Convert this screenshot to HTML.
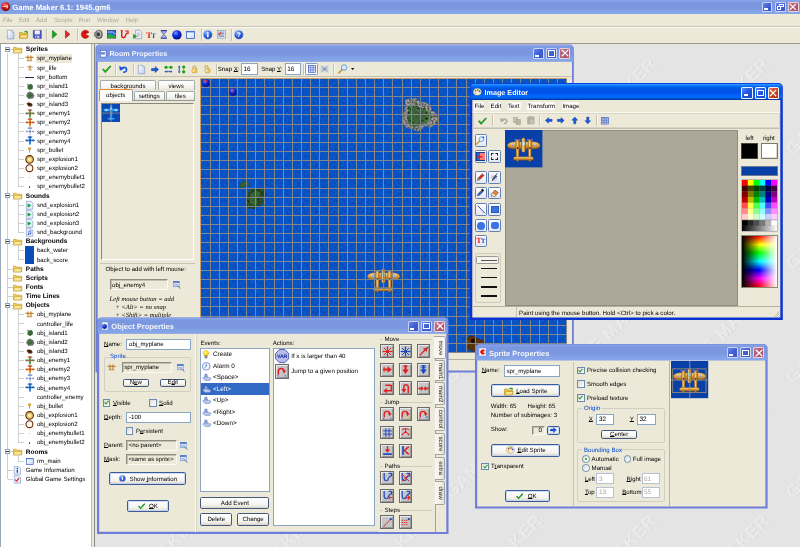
<!DOCTYPE html><html><head><meta charset="utf-8"><title>Game Maker 6.1: 1945.gm6</title><style>
html,body{margin:0;padding:0}
body{width:800px;height:547px;overflow:hidden;background:#e4e4e4;position:relative;font-family:"Liberation Sans",sans-serif;font-size:6.1px;color:#000;text-rendering:geometricPrecision}
div{position:absolute;box-sizing:border-box}
svg{position:absolute;overflow:visible}
.t{white-space:nowrap;line-height:8px;height:8px;font-size:6.1px}
.b{font-weight:bold}
.tt{white-space:nowrap;line-height:10px;height:10px;font-weight:bold;color:#fff;font-size:7.3px}
u{text-decoration:underline;text-decoration-thickness:0.45px;text-underline-offset:0.25px}
.btn{border:0.5px solid #44587e;border-radius:1.7px;background:linear-gradient(#fff,#f4f3ee 70%,#d8d4c6)}
.fld{border:0.6px solid #8ba6c4;background:#fff}
.fldd{border:0.6px solid #8e8c7e;border-right-color:#fbfaf4;border-bottom-color:#fbfaf4;background:#ece9d8;box-shadow:inset 1px 1px 0 #c2bfb0}
.cb{border:0.6px solid #6a8cb0;background:linear-gradient(135deg,#dcdcd4,#fff)}
.rb{border:0.6px solid #6a8cb0;background:linear-gradient(135deg,#dcdcd4,#fff);border-radius:50%}
.gb{border:0.6px solid #d0d0bf;border-radius:2px}
.ab{border:0.6px solid #6a6a6a;background:#c6c6c6;box-shadow:inset 0.7px 0.7px 0 #f4f4f4,inset -0.7px -0.7px 0 #888}
.tb{border:0.6px solid #6080b8;border-radius:1.5px;background:linear-gradient(#fff,#e6e6ee)}
</style></head><body><div id="w" style="left:0;top:0;width:800px;height:547px;will-change:transform">
<div style="left:0px;top:0px;width:800px;height:14.2px;background:linear-gradient(180deg,#8ca6ea 0,#7a97e0 18%,#7a96df 55%,#83a2e6 80%,#86a8ea 100%)"></div>
<svg style="left:0.9px;top:2.2px" width="9.4" height="9.4" viewBox="0 0 21 21"><defs><radialGradient id="rb" cx="0.4" cy="0.3" r="0.7"><stop offset="0" stop-color="#ff8a7a"/><stop offset="0.45" stop-color="#e01818"/><stop offset="1" stop-color="#7a0808"/></radialGradient></defs><circle cx="10.5" cy="10.5" r="10" fill="url(#rb)"/><path d="M3 9h9v-3h4v8h-4v-3h-9z" fill="#f4dada" opacity=".85"/></svg>
<div class="tt" style="left:12.2px;top:3.3px;font-size:7.7px;letter-spacing:0px;">Game Maker 6.1: 1945.gm6</div>
<div style="left:761.9px;top:1.6px;width:10.6px;height:10.6px;background:linear-gradient(135deg,#6a88ea,#4060d4 50%,#3a56cc);border:0.7px solid rgba(255,255,255,0.72);border-radius:1.6px"></div>
<div style="left:764.23px;top:8.17px;width:3.82px;height:1.91px;background:#fff"></div>
<div style="left:774.8px;top:1.6px;width:10.8px;height:10.6px;background:linear-gradient(135deg,#6a88ea,#4060d4 50%,#3a56cc);border:0.7px solid rgba(255,255,255,0.72);border-radius:1.6px"></div>
<div style="left:779.34px;top:3.51px;width:4.32px;height:3.92px;border:0.7px solid #fff;border-top-width:1.2px"></div>
<div style="left:776.96px;top:6.05px;width:4.32px;height:4.03px;border:0.7px solid #fff;border-top-width:1.2px;background:#3c62d8"></div>
<div style="left:788px;top:1.6px;width:10.7px;height:10.6px;background:linear-gradient(135deg,#c8788c,#b45c74 50%,#a85068);border:0.7px solid rgba(255,255,255,0.72);border-radius:1.6px"></div>
<svg style="left:790.49px;top:4.04px" width="5.72" height="5.72" viewBox="0 0 10 10"><path d="M0.5 0.5L9.5 9.5M9.5 0.5L0.5 9.5" stroke="#fff" stroke-width="2" stroke-linecap="square"/></svg>
<div style="left:0px;top:14.2px;width:800px;height:11.4px;background:#ece9d8"></div>
<div class="t" style="left:2.9px;top:16.7px;color:#aca899;">File</div>
<div class="t" style="left:19px;top:16.7px;color:#aca899;">Edit</div>
<div class="t" style="left:36px;top:16.7px;color:#aca899;">Add</div>
<div class="t" style="left:54px;top:16.7px;color:#aca899;">Scripts</div>
<div class="t" style="left:79px;top:16.7px;color:#aca899;">Run</div>
<div class="t" style="left:97px;top:16.7px;color:#aca899;">Window</div>
<div class="t" style="left:125.5px;top:16.7px;color:#aca899;">Help</div>
<div style="left:0px;top:25.6px;width:800px;height:17.6px;background:#ece9d8;border-top:0.6px solid #c9c5b5;box-shadow:inset 0 0.7px 0 #fff"></div>
<div style="left:0px;top:43.1px;width:800px;height:1px;background:#9c9a8e"></div>
<div style="left:45.5px;top:28.5px;width:1.2px;height:12px;border-left:0.6px solid #c8c4b2;border-right:0.6px solid #f6f4ea"></div>
<div style="left:76.5px;top:28.5px;width:1.2px;height:12px;border-left:0.6px solid #c8c4b2;border-right:0.6px solid #f6f4ea"></div>
<div style="left:201px;top:28.5px;width:1.2px;height:12px;border-left:0.6px solid #c8c4b2;border-right:0.6px solid #f6f4ea"></div>
<div style="left:230.5px;top:28.5px;width:1.2px;height:12px;border-left:0.6px solid #c8c4b2;border-right:0.6px solid #f6f4ea"></div>
<svg style="left:6.6px;top:30px" width="7.2" height="9.2" viewBox="0 0 14 18"><defs><linearGradient id="pg" x1="0" y1="0" x2="1" y2="1"><stop offset="0" stop-color="#fff"/><stop offset="1" stop-color="#b8cef0"/></linearGradient></defs><path d="M0.6 0.6h9l3.8 3.8v13h-12.8z" fill="url(#pg)" stroke="#7088b8" stroke-width="1.1"/><path d="M9.6 0.6v3.8h3.8" fill="#e6eefc" stroke="#7088b8" stroke-width="1"/></svg>
<svg style="left:19px;top:30px" width="9.4" height="9" viewBox="0 0 19 18"><path d="M1 5h6l1.5 2h8.5v9.5h-16z" fill="#f0c83c" stroke="#a87c10" stroke-width="1"/><path d="M1 16.5l3-7h14.5l-3 7z" fill="#fbe487" stroke="#a87c10" stroke-width="1"/><path d="M10 4c2-3 5-3 7-1l1-1.2v4h-4l1.2-1.2c-1.4-1.2-3-1-4 .2z" fill="#28a028"/></svg>
<svg style="left:33px;top:30.2px" width="8.6" height="8.8" viewBox="0 0 17 17"><path d="M0.6 0.6h15.8v15.8h-14l-1.8-1.8z" fill="#4858c8" stroke="#283088" stroke-width="1"/><rect x="3.5" y="0.8" width="10" height="7.5" fill="#f4f4fc"/><rect x="4.5" y="11" width="8" height="5.4" fill="#c8ccea"/><rect x="6" y="12" width="2.4" height="3.6" fill="#4858c8"/></svg>
<svg style="left:52px;top:30.4px" width="5.4" height="8.6" viewBox="0 0 10 16"><path d="M0.8 0.8L9.2 8L0.8 15.2z" fill="#18a818" stroke="#0a6a0a" stroke-width="1"/></svg>
<svg style="left:65px;top:30.4px" width="5.4" height="8.6" viewBox="0 0 10 16"><path d="M0.8 0.8L9.2 8L0.8 15.2z" fill="#e02828" stroke="#8a1010" stroke-width="1"/></svg>
<svg style="left:80.9px;top:30.3px" width="8.6" height="8.6" viewBox="0 0 20 20"><path d="M10 10L18.6 5.2A9.6 9.6 0 1 0 18.6 14.8z" fill="#e81010" stroke="#7a0000" stroke-width="1"/><circle cx="9.5" cy="5.2" r="1.4" fill="#400"/></svg>
<svg style="left:94px;top:30.2px" width="8.8" height="8.8" viewBox="0 0 20 20"><defs><radialGradient id="sg" cx="0.45" cy="0.45" r="0.6"><stop offset="0" stop-color="#555"/><stop offset="0.5" stop-color="#bbb"/><stop offset="1" stop-color="#444"/></radialGradient></defs><ellipse cx="11" cy="10" rx="8" ry="9.5" fill="url(#sg)" stroke="#333" stroke-width="1"/><ellipse cx="10" cy="10" rx="3.2" ry="4.2" fill="#333"/><path d="M1 6l5-2v12l-5-2z" fill="#888" stroke="#444" stroke-width=".8"/></svg>
<svg style="left:106.6px;top:30.4px" width="9.2" height="8.4" viewBox="0 0 18 17"><rect x="0.6" y="0.6" width="16.8" height="15.8" fill="#2c6ad8" stroke="#1a2a5a" stroke-width="1.2"/><path d="M1.2 11c3-4 5-4 8-1s5 1 7.6-2v8.2h-15.6z" fill="#28a838"/><path d="M1.2 4h10l3 3h3" stroke="#dfeaff" stroke-width="1.4" fill="none"/></svg>
<svg style="left:119.6px;top:30.2px" width="8.8" height="8.8" viewBox="0 0 18 18"><path d="M3.500 1.500v10.500c0 5 7.500 5 7.500 0 0-3 3-4 4.500-6.500" fill="none" stroke="#e01828" stroke-width="2.800"/><path d="M10.500 2h6v6" fill="none" stroke="#e01828" stroke-width="2.400"/><path d="M1 1.500h5" stroke="#e01828" stroke-width="2"/></svg>
<svg style="left:132.8px;top:30px" width="9.2" height="9.2" viewBox="0 0 18 18"><path d="M5 0.6h8.5l3.5 3.5v13h-12z" fill="#eef2fa" stroke="#6078a8" stroke-width="1"/><path d="M7 6h7M7 8.5h7M7 11h7M7 13.5h5" stroke="#7a8cb8" stroke-width="0.9"/><path d="M0.8 8.2L7 12.5L0.8 16.8z" fill="#18a818" stroke="#0a6a0a" stroke-width="0.8"/></svg>
<div class="t b" style="left:146.2px;top:31.3px;font-size:8.6px;color:#e01818;font-family:'Liberation Serif',serif;letter-spacing:-0.7px">T<span style="font-size:7px;color:#1848c8">T</span></div>
<svg style="left:160px;top:30.2px" width="7.6" height="8.8" viewBox="0 0 15 18"><path d="M1 1h13M1 17h13" stroke="#283088" stroke-width="1.8"/><path d="M2.5 2c0 4 3.5 5 5 7 1.500-2 5-3 5-7zM2.500 16c0-4 3.500-5 5-7 1.500 2 5 3 5 7z" fill="#9ab4f0" stroke="#283088" stroke-width="1"/></svg>
<svg style="left:171.9px;top:29.9px" width="9.8" height="9.8" viewBox="0 0 20 20"><defs><radialGradient id="bg1" cx="0.38" cy="0.3" r="0.75"><stop offset="0" stop-color="#7aa0ff"/><stop offset="0.4" stop-color="#1030e8"/><stop offset="1" stop-color="#000878"/></radialGradient></defs><circle cx="10" cy="10" r="9.600" fill="url(#bg1)"/></svg>
<svg style="left:185.6px;top:30.6px" width="9" height="8" viewBox="0 0 18 16"><defs><linearGradient id="rmg" x1="0" y1="0" x2="1" y2="1"><stop offset="0" stop-color="#fff"/><stop offset="1" stop-color="#c4dcfc"/></linearGradient></defs><rect x="0.8" y="0.8" width="16.4" height="14.4" fill="url(#rmg)" stroke="#2858c8" stroke-width="1.500"/><rect x="1.400" y="1.400" width="15.2" height="1.200" fill="#2858c8"/></svg>
<svg style="left:202.8px;top:30px" width="9.6" height="9.6" viewBox="0 0 20 20"><defs><radialGradient id="ig" cx="0.4" cy="0.3" r="0.8"><stop offset="0" stop-color="#9ac0ff"/><stop offset="0.5" stop-color="#2a60e0"/><stop offset="1" stop-color="#10308a"/></radialGradient></defs><circle cx="10" cy="10" r="9.4" fill="url(#ig)" stroke="#c8d4ee" stroke-width="1"/><rect x="8.600" y="8.400" width="3" height="7" fill="#fff"/><circle cx="10" cy="5.400" r="1.700" fill="#fff"/></svg>
<svg style="left:216.6px;top:30.4px" width="8.8" height="8.6" viewBox="0 0 18 17"><rect x="1" y="0.6" width="16" height="15.8" fill="#eef2fa" stroke="#6078a8" stroke-width="1"/><path d="M3 4h12M3 7h12M3 10h12M3 13h12" stroke="#4a5a98" stroke-width="1.300"/><path d="M2 7l3 3 3-6" stroke="#e01818" stroke-width="1.800" fill="none"/></svg>
<svg style="left:233.9px;top:30px" width="9.6" height="9.6" viewBox="0 0 20 20"><circle cx="10" cy="10" r="9.400" fill="url(#ig)" stroke="#c8d4ee" stroke-width="1"/><text x="10" y="15" font-size="14" font-weight="bold" fill="#fff" text-anchor="middle" font-family="Liberation Sans">?</text></svg>
<div style="left:0px;top:44.1px;width:91.6px;height:503px;background:#fff;border-left:0.7px solid #9aa8b8;border-right:0.6px solid #a8bcd8"></div>
<div style="left:91.6px;top:44.1px;width:2.4px;height:503px;background:#ece9d8"></div>
<div style="left:94px;top:44.1px;width:1px;height:503px;background:#8a8a84"></div>
<div style="left:7.1px;top:52.5px;width:0.6px;height:426.72px;background:#cfcfcf"></div>
<div style="left:17.5px;top:53.5px;width:0.6px;height:133.15px;background:#cfcfcf"></div>
<div style="left:17.5px;top:199.79px;width:0.6px;height:32.57px;background:#cfcfcf"></div>
<div style="left:17.5px;top:245.5px;width:0.6px;height:14.29px;background:#cfcfcf"></div>
<div style="left:17.5px;top:309.5px;width:0.6px;height:133.14px;background:#cfcfcf"></div>
<div style="left:17.5px;top:455.79px;width:0.6px;height:5.14px;background:#cfcfcf"></div>
<div style="left:10.4px;top:49.2px;width:2.6px;height:0.6px;background:#cfcfcf"></div>
<div style="left:5.1px;top:46.9px;width:5.2px;height:5.2px;border:0.6px solid #8aa0c0;background:#fff;border-radius:0.5px"></div>
<div style="left:6.3px;top:49.2px;width:2.8px;height:0.6px;background:#333"></div>
<svg style="left:13px;top:45.9px" width="9.2" height="7.4" viewBox="0 0 18 15"><path d="M0.600 2.500h5.500l1.500 2h9.800v9.600h-16.800z" fill="#f2cf55" stroke="#b08a1a" stroke-width="1"/><path d="M0.600 14.100l2.200-7h15l-2.400 7z" fill="#fbe897" stroke="#b08a1a" stroke-width="0.900"/></svg>
<div class="t b" style="left:25.8px;top:46.3px;font-size:6.5px;">Sprites</div>
<div style="left:17.8px;top:58.34px;width:6.7px;height:0.6px;background:#cfcfcf"></div>
<div style="left:35.6px;top:54.34px;width:36.2px;height:8.8px;background:#ece9d8"></div>
<svg style="left:25.1px;top:55.14px" width="9" height="7" viewBox="0 0 18 14"><rect x="0.500" y="3.500" width="17" height="2.600" rx="1.200" fill="#c88a38"/><rect x="5" y="1" width="2.200" height="10" fill="#b87828"/><rect x="10.800" y="1" width="2.200" height="10" fill="#b87828"/><rect x="3.500" y="10.500" width="11" height="2" fill="#c88a38"/></svg>
<div class="t" style="left:36.9px;top:55.44px;">spr_myplane</div>
<div style="left:17.8px;top:67.49px;width:6.7px;height:0.6px;background:#cfcfcf"></div>
<svg style="left:26.6px;top:64.79px" width="6" height="6" viewBox="0 0 12 12"><rect x="0.500" y="3" width="11" height="2" fill="#c88a38"/><rect x="5" y="0.500" width="2" height="9" fill="#b87828"/><rect x="2.500" y="9" width="7" height="1.800" fill="#c88a38"/></svg>
<div class="t" style="left:36.9px;top:64.59px;">spr_life</div>
<div style="left:17.8px;top:76.63px;width:6.7px;height:0.6px;background:#cfcfcf"></div>
<div style="left:25.4px;top:76.73px;width:8.6px;height:0.9px;background:#1a2a4a"></div>
<div class="t" style="left:36.9px;top:73.73px;">spr_bottom</div>
<div style="left:17.8px;top:85.77px;width:6.7px;height:0.6px;background:#cfcfcf"></div>
<svg style="left:26.1px;top:82.57px" width="7.5" height="7.5" viewBox="0 0 15 15"><path d="M5 3l6-1 3 4-1 6-6 2-4-3 0-5z" fill="#3a6a3a"/><path d="M2 2l2-1 1 2-2 1z" fill="#4a7a4a"/></svg>
<div class="t" style="left:36.9px;top:82.87px;">spr_island1</div>
<div style="left:17.8px;top:94.92px;width:6.7px;height:0.6px;background:#cfcfcf"></div>
<svg style="left:24.6px;top:91.22px" width="10" height="8" viewBox="0 0 20 16"><path d="M2 10l3-7 5-2 6 3 3 6-3 5-9 1z" fill="#6a7a68"/><path d="M5 9l3-4 5 0 3 4-4 4-5 0z" fill="#3f6a3c"/></svg>
<div class="t" style="left:36.9px;top:92.02px;">spr_island2</div>
<div style="left:17.8px;top:104.06px;width:6.7px;height:0.6px;background:#cfcfcf"></div>
<svg style="left:26.1px;top:101.86px" width="7" height="5" viewBox="0 0 14 10"><path d="M1 3l4-2.500 6 2 2.500 4-3 3-6-1z" fill="#5a3010"/><path d="M4 4l3-1 3 2-2 2z" fill="#2a1406"/></svg>
<div class="t" style="left:36.9px;top:101.16px;">spr_island3</div>
<div style="left:17.8px;top:113.2px;width:6.7px;height:0.6px;background:#cfcfcf"></div>
<svg style="left:24.6px;top:109px" width="10" height="9" viewBox="0 0 20 18"><rect x="0.500" y="7" width="19" height="3.600" rx="1.600" fill="#4a9a50"/><rect x="8.200" y="0.500" width="3.600" height="17" rx="1.600" fill="#4a9a50"/><rect x="5.500" y="1" width="9" height="2.400" fill="#d04830"/><circle cx="10" cy="9" r="2" fill="#d04830"/><circle cx="4" cy="8.800" r="1.500" fill="#d04830"/><circle cx="16" cy="8.800" r="1.500" fill="#d04830"/></svg>
<div class="t" style="left:36.9px;top:110.3px;">spr_enemy1</div>
<div style="left:17.8px;top:122.34px;width:6.7px;height:0.6px;background:#cfcfcf"></div>
<svg style="left:24.6px;top:118.14px" width="10" height="9" viewBox="0 0 20 18"><rect x="0.500" y="7" width="19" height="3.600" rx="1.600" fill="#e08828"/><rect x="8.200" y="0.500" width="3.600" height="17" rx="1.600" fill="#e08828"/><rect x="5.500" y="1" width="9" height="2.400" fill="#c03820"/><circle cx="10" cy="9" r="2" fill="#c03820"/><circle cx="4" cy="8.800" r="1.500" fill="#c03820"/><circle cx="16" cy="8.800" r="1.500" fill="#c03820"/></svg>
<div class="t" style="left:36.9px;top:119.44px;">spr_enemy2</div>
<div style="left:17.8px;top:131.49px;width:6.7px;height:0.6px;background:#cfcfcf"></div>
<svg style="left:24.6px;top:127.29px" width="10" height="9" viewBox="0 0 20 18"><rect x="0.500" y="7" width="19" height="3.600" rx="1.600" fill="#d8dce8"/><rect x="8.200" y="0.500" width="3.600" height="17" rx="1.600" fill="#d8dce8"/><rect x="5.500" y="1" width="9" height="2.400" fill="#5080d0"/><circle cx="10" cy="9" r="2" fill="#5080d0"/><circle cx="4" cy="8.800" r="1.500" fill="#5080d0"/><circle cx="16" cy="8.800" r="1.500" fill="#5080d0"/></svg>
<div class="t" style="left:36.9px;top:128.59px;">spr_enemy3</div>
<div style="left:17.8px;top:140.63px;width:6.7px;height:0.6px;background:#cfcfcf"></div>
<svg style="left:24.6px;top:136.43px" width="10" height="9" viewBox="0 0 20 18"><rect x="0.500" y="7" width="19" height="3.600" rx="1.600" fill="#2a78d8"/><rect x="8.200" y="0.500" width="3.600" height="17" rx="1.600" fill="#2a78d8"/><rect x="5.500" y="1" width="9" height="2.400" fill="#1850a8"/><circle cx="10" cy="9" r="2" fill="#1850a8"/><circle cx="4" cy="8.800" r="1.500" fill="#1850a8"/><circle cx="16" cy="8.800" r="1.500" fill="#1850a8"/></svg>
<div class="t" style="left:36.9px;top:137.73px;">spr_enemy4</div>
<div style="left:17.8px;top:149.77px;width:6.7px;height:0.6px;background:#cfcfcf"></div>
<svg style="left:28px;top:147.07px" width="3.2" height="6" viewBox="0 0 6 12"><circle cx="3" cy="3.500" r="2.600" fill="#f0b020" stroke="#a86a08" stroke-width="0.800"/><rect x="2.200" y="6" width="1.600" height="5" fill="#c88018"/></svg>
<div class="t" style="left:36.9px;top:146.87px;">spr_bullet</div>
<div style="left:17.8px;top:158.92px;width:6.7px;height:0.6px;background:#cfcfcf"></div>
<svg style="left:25px;top:154.82px" width="9.2" height="8.8" viewBox="0 0 20 20"><circle cx="10" cy="10" r="8.600" fill="#f0c060" stroke="#5a2a08" stroke-width="2.400"/><circle cx="10" cy="10" r="4" fill="#fff0b0"/></svg>
<div class="t" style="left:36.9px;top:156.02px;">spr_explosion1</div>
<div style="left:17.8px;top:168.06px;width:6.7px;height:0.6px;background:#cfcfcf"></div>
<svg style="left:25.2px;top:164.16px" width="8.8" height="8.4" viewBox="0 0 20 20"><circle cx="10" cy="10" r="8.200" fill="#fff6ee" stroke="#6a3010" stroke-width="2.600"/></svg>
<div class="t" style="left:36.9px;top:165.16px;">spr_explosion2</div>
<div style="left:17.8px;top:177.2px;width:6.7px;height:0.6px;background:#cfcfcf"></div>
<div style="left:28.8px;top:176.9px;width:1.4px;height:1.3px;background:#e08020;border-radius:50%"></div>
<div class="t" style="left:36.9px;top:174.3px;">spr_enemybullet1</div>
<div style="left:17.8px;top:186.34px;width:6.7px;height:0.6px;background:#cfcfcf"></div>
<div style="left:28.7px;top:185.84px;width:1.7px;height:1.7px;background:#5a3a10;border-radius:50%"></div>
<div class="t" style="left:36.9px;top:183.44px;">spr_enemybullet2</div>
<div style="left:10.4px;top:195.49px;width:2.6px;height:0.6px;background:#cfcfcf"></div>
<div style="left:5.1px;top:193.19px;width:5.2px;height:5.2px;border:0.6px solid #8aa0c0;background:#fff;border-radius:0.5px"></div>
<div style="left:6.3px;top:195.49px;width:2.8px;height:0.6px;background:#333"></div>
<svg style="left:13px;top:192.19px" width="9.2" height="7.4" viewBox="0 0 18 15"><path d="M0.600 2.500h5.500l1.500 2h9.800v9.600h-16.800z" fill="#f2cf55" stroke="#b08a1a" stroke-width="1"/><path d="M0.600 14.100l2.200-7h15l-2.400 7z" fill="#fbe897" stroke="#b08a1a" stroke-width="0.900"/></svg>
<div class="t b" style="left:25.8px;top:192.59px;font-size:6.5px;">Sounds</div>
<div style="left:17.8px;top:204.63px;width:6.7px;height:0.6px;background:#cfcfcf"></div>
<svg style="left:26px;top:200.63px" width="7.2" height="8.6" viewBox="0 0 14 17"><path d="M0.600 0.600h9l3.800 3.800v12h-12.800z" fill="#eaf0fc" stroke="#6080b8" stroke-width="1"/><path d="M4 6v6M4 6l5 2.500v1l-5 2.500z" fill="#18a040" stroke="#18a040" stroke-width="1.200"/></svg>
<div class="t" style="left:36.9px;top:201.73px;">snd_explosion1</div>
<div style="left:17.8px;top:213.77px;width:6.7px;height:0.6px;background:#cfcfcf"></div>
<svg style="left:26px;top:209.77px" width="7.2" height="8.6" viewBox="0 0 14 17"><path d="M0.600 0.600h9l3.800 3.800v12h-12.800z" fill="#eaf0fc" stroke="#6080b8" stroke-width="1"/><path d="M4 6v6M4 6l5 2.500v1l-5 2.500z" fill="#18a040" stroke="#18a040" stroke-width="1.200"/></svg>
<div class="t" style="left:36.9px;top:210.87px;">snd_explosion2</div>
<div style="left:17.8px;top:222.92px;width:6.7px;height:0.6px;background:#cfcfcf"></div>
<svg style="left:26px;top:218.92px" width="7.2" height="8.6" viewBox="0 0 14 17"><path d="M0.600 0.600h9l3.800 3.800v12h-12.800z" fill="#eaf0fc" stroke="#6080b8" stroke-width="1"/><path d="M4 6v6M4 6l5 2.500v1l-5 2.500z" fill="#18a040" stroke="#18a040" stroke-width="1.200"/></svg>
<div class="t" style="left:36.9px;top:220.02px;">snd_explosion3</div>
<div style="left:17.8px;top:232.06px;width:6.7px;height:0.6px;background:#cfcfcf"></div>
<svg style="left:26px;top:228.06px" width="7.2" height="8.6" viewBox="0 0 14 17"><path d="M0.600 0.600h9l3.800 3.800v12h-12.800z" fill="#eaf0fc" stroke="#6080b8" stroke-width="1"/><path d="M5.500 12v-6l4-1v6" fill="none" stroke="#2848c8" stroke-width="1.200"/><circle cx="4.500" cy="12.200" r="1.500" fill="#2848c8"/><circle cx="8.500" cy="11.200" r="1.500" fill="#2848c8"/></svg>
<div class="t" style="left:36.9px;top:229.16px;">snd_background</div>
<div style="left:10.4px;top:241.2px;width:2.6px;height:0.6px;background:#cfcfcf"></div>
<div style="left:5.1px;top:238.9px;width:5.2px;height:5.2px;border:0.6px solid #8aa0c0;background:#fff;border-radius:0.5px"></div>
<div style="left:6.3px;top:241.2px;width:2.8px;height:0.6px;background:#333"></div>
<svg style="left:13px;top:237.9px" width="9.2" height="7.4" viewBox="0 0 18 15"><path d="M0.600 2.500h5.500l1.500 2h9.800v9.600h-16.800z" fill="#f2cf55" stroke="#b08a1a" stroke-width="1"/><path d="M0.600 14.100l2.200-7h15l-2.400 7z" fill="#fbe897" stroke="#b08a1a" stroke-width="0.900"/></svg>
<div class="t b" style="left:25.8px;top:238.3px;font-size:6.5px;">Backgrounds</div>
<div style="left:17.8px;top:250.35px;width:6.7px;height:0.6px;background:#cfcfcf"></div>
<div style="left:25px;top:246.05px;width:9.2px;height:9.2px;background:#0a4cb8"></div>
<div class="t" style="left:36.9px;top:247.45px;">back_water</div>
<div style="left:17.8px;top:259.49px;width:6.7px;height:0.6px;background:#cfcfcf"></div>
<div style="left:25px;top:255.19px;width:9.2px;height:9.2px;background:#0a4cb8"></div>
<div class="t" style="left:36.9px;top:256.59px;">back_score</div>
<div style="left:8px;top:268.63px;width:5px;height:0.6px;background:#cfcfcf"></div>
<svg style="left:13px;top:265.33px" width="9.2" height="7.4" viewBox="0 0 18 15"><path d="M0.600 2.500h5.500l1.500 2h9.800v9.600h-16.800z" fill="#f2cf55" stroke="#b08a1a" stroke-width="1"/><path d="M0.600 14.100l2.200-7h15l-2.400 7z" fill="#fbe897" stroke="#b08a1a" stroke-width="0.900"/></svg>
<div class="t b" style="left:25.8px;top:265.73px;font-size:6.5px;">Paths</div>
<div style="left:8px;top:277.78px;width:5px;height:0.6px;background:#cfcfcf"></div>
<svg style="left:13px;top:274.48px" width="9.2" height="7.4" viewBox="0 0 18 15"><path d="M0.600 2.500h5.500l1.500 2h9.800v9.600h-16.800z" fill="#f2cf55" stroke="#b08a1a" stroke-width="1"/><path d="M0.600 14.100l2.200-7h15l-2.400 7z" fill="#fbe897" stroke="#b08a1a" stroke-width="0.900"/></svg>
<div class="t b" style="left:25.8px;top:274.88px;font-size:6.5px;">Scripts</div>
<div style="left:8px;top:286.92px;width:5px;height:0.6px;background:#cfcfcf"></div>
<svg style="left:13px;top:283.62px" width="9.2" height="7.4" viewBox="0 0 18 15"><path d="M0.600 2.500h5.500l1.500 2h9.800v9.600h-16.800z" fill="#f2cf55" stroke="#b08a1a" stroke-width="1"/><path d="M0.600 14.100l2.200-7h15l-2.400 7z" fill="#fbe897" stroke="#b08a1a" stroke-width="0.900"/></svg>
<div class="t b" style="left:25.8px;top:284.02px;font-size:6.5px;">Fonts</div>
<div style="left:8px;top:296.06px;width:5px;height:0.6px;background:#cfcfcf"></div>
<svg style="left:13px;top:292.76px" width="9.2" height="7.4" viewBox="0 0 18 15"><path d="M0.600 2.500h5.500l1.500 2h9.800v9.600h-16.800z" fill="#f2cf55" stroke="#b08a1a" stroke-width="1"/><path d="M0.600 14.100l2.200-7h15l-2.400 7z" fill="#fbe897" stroke="#b08a1a" stroke-width="0.900"/></svg>
<div class="t b" style="left:25.8px;top:293.16px;font-size:6.5px;">Time Lines</div>
<div style="left:10.4px;top:305.2px;width:2.6px;height:0.6px;background:#cfcfcf"></div>
<div style="left:5.1px;top:302.9px;width:5.2px;height:5.2px;border:0.6px solid #8aa0c0;background:#fff;border-radius:0.5px"></div>
<div style="left:6.3px;top:305.2px;width:2.8px;height:0.6px;background:#333"></div>
<svg style="left:13px;top:301.9px" width="9.2" height="7.4" viewBox="0 0 18 15"><path d="M0.600 2.500h5.500l1.500 2h9.800v9.600h-16.800z" fill="#f2cf55" stroke="#b08a1a" stroke-width="1"/><path d="M0.600 14.100l2.200-7h15l-2.400 7z" fill="#fbe897" stroke="#b08a1a" stroke-width="0.900"/></svg>
<div class="t b" style="left:25.8px;top:302.3px;font-size:6.5px;">Objects</div>
<div style="left:17.8px;top:314.35px;width:6.7px;height:0.6px;background:#cfcfcf"></div>
<svg style="left:25.1px;top:311.15px" width="9" height="7" viewBox="0 0 18 14"><rect x="0.500" y="3.500" width="17" height="2.600" rx="1.200" fill="#c88a38"/><rect x="5" y="1" width="2.200" height="10" fill="#b87828"/><rect x="10.800" y="1" width="2.200" height="10" fill="#b87828"/><rect x="3.500" y="10.500" width="11" height="2" fill="#c88a38"/></svg>
<div class="t" style="left:36.9px;top:311.45px;">obj_myplane</div>
<div style="left:17.8px;top:323.49px;width:6.7px;height:0.6px;background:#cfcfcf"></div>
<div class="t" style="left:36.9px;top:320.59px;">controller_life</div>
<div style="left:17.8px;top:332.63px;width:6.7px;height:0.6px;background:#cfcfcf"></div>
<svg style="left:26.1px;top:329.43px" width="7.5" height="7.5" viewBox="0 0 15 15"><path d="M5 3l6-1 3 4-1 6-6 2-4-3 0-5z" fill="#3a6a3a"/><path d="M2 2l2-1 1 2-2 1z" fill="#4a7a4a"/></svg>
<div class="t" style="left:36.9px;top:329.73px;">obj_island1</div>
<div style="left:17.8px;top:341.78px;width:6.7px;height:0.6px;background:#cfcfcf"></div>
<svg style="left:24.6px;top:338.08px" width="10" height="8" viewBox="0 0 20 16"><path d="M2 10l3-7 5-2 6 3 3 6-3 5-9 1z" fill="#6a7a68"/><path d="M5 9l3-4 5 0 3 4-4 4-5 0z" fill="#3f6a3c"/></svg>
<div class="t" style="left:36.9px;top:338.88px;">obj_island2</div>
<div style="left:17.8px;top:350.92px;width:6.7px;height:0.6px;background:#cfcfcf"></div>
<svg style="left:26.1px;top:348.72px" width="7" height="5" viewBox="0 0 14 10"><path d="M1 3l4-2.500 6 2 2.500 4-3 3-6-1z" fill="#5a3010"/><path d="M4 4l3-1 3 2-2 2z" fill="#2a1406"/></svg>
<div class="t" style="left:36.9px;top:348.02px;">obj_island3</div>
<div style="left:17.8px;top:360.06px;width:6.7px;height:0.6px;background:#cfcfcf"></div>
<svg style="left:24.6px;top:355.86px" width="10" height="9" viewBox="0 0 20 18"><rect x="0.500" y="7" width="19" height="3.600" rx="1.600" fill="#4a9a50"/><rect x="8.200" y="0.500" width="3.600" height="17" rx="1.600" fill="#4a9a50"/><rect x="5.500" y="1" width="9" height="2.400" fill="#d04830"/><circle cx="10" cy="9" r="2" fill="#d04830"/><circle cx="4" cy="8.800" r="1.500" fill="#d04830"/><circle cx="16" cy="8.800" r="1.500" fill="#d04830"/></svg>
<div class="t" style="left:36.9px;top:357.16px;">obj_enemy1</div>
<div style="left:17.8px;top:369.2px;width:6.7px;height:0.6px;background:#cfcfcf"></div>
<svg style="left:24.6px;top:365px" width="10" height="9" viewBox="0 0 20 18"><rect x="0.500" y="7" width="19" height="3.600" rx="1.600" fill="#e08828"/><rect x="8.200" y="0.500" width="3.600" height="17" rx="1.600" fill="#e08828"/><rect x="5.500" y="1" width="9" height="2.400" fill="#c03820"/><circle cx="10" cy="9" r="2" fill="#c03820"/><circle cx="4" cy="8.800" r="1.500" fill="#c03820"/><circle cx="16" cy="8.800" r="1.500" fill="#c03820"/></svg>
<div class="t" style="left:36.9px;top:366.31px;">obj_enemy2</div>
<div style="left:17.8px;top:378.35px;width:6.7px;height:0.6px;background:#cfcfcf"></div>
<svg style="left:24.6px;top:374.15px" width="10" height="9" viewBox="0 0 20 18"><rect x="0.500" y="7" width="19" height="3.600" rx="1.600" fill="#d8dce8"/><rect x="8.200" y="0.500" width="3.600" height="17" rx="1.600" fill="#d8dce8"/><rect x="5.500" y="1" width="9" height="2.400" fill="#5080d0"/><circle cx="10" cy="9" r="2" fill="#5080d0"/><circle cx="4" cy="8.800" r="1.500" fill="#5080d0"/><circle cx="16" cy="8.800" r="1.500" fill="#5080d0"/></svg>
<div class="t" style="left:36.9px;top:375.45px;">obj_enemy3</div>
<div style="left:17.8px;top:387.49px;width:6.7px;height:0.6px;background:#cfcfcf"></div>
<svg style="left:24.6px;top:383.29px" width="10" height="9" viewBox="0 0 20 18"><rect x="0.500" y="7" width="19" height="3.600" rx="1.600" fill="#2a78d8"/><rect x="8.200" y="0.500" width="3.600" height="17" rx="1.600" fill="#2a78d8"/><rect x="5.500" y="1" width="9" height="2.400" fill="#1850a8"/><circle cx="10" cy="9" r="2" fill="#1850a8"/><circle cx="4" cy="8.800" r="1.500" fill="#1850a8"/><circle cx="16" cy="8.800" r="1.500" fill="#1850a8"/></svg>
<div class="t" style="left:36.9px;top:384.59px;">obj_enemy4</div>
<div style="left:17.8px;top:396.63px;width:6.7px;height:0.6px;background:#cfcfcf"></div>
<div class="t" style="left:36.9px;top:393.73px;">controller_enemy</div>
<div style="left:17.8px;top:405.78px;width:6.7px;height:0.6px;background:#cfcfcf"></div>
<svg style="left:28px;top:403.08px" width="3.2" height="6" viewBox="0 0 6 12"><circle cx="3" cy="3.500" r="2.600" fill="#f0b020" stroke="#a86a08" stroke-width="0.800"/><rect x="2.200" y="6" width="1.600" height="5" fill="#c88018"/></svg>
<div class="t" style="left:36.9px;top:402.88px;">obj_bullet</div>
<div style="left:17.8px;top:414.92px;width:6.7px;height:0.6px;background:#cfcfcf"></div>
<svg style="left:25px;top:410.82px" width="9.2" height="8.8" viewBox="0 0 20 20"><circle cx="10" cy="10" r="8.600" fill="#f0c060" stroke="#5a2a08" stroke-width="2.400"/><circle cx="10" cy="10" r="4" fill="#fff0b0"/></svg>
<div class="t" style="left:36.9px;top:412.02px;">obj_explosion1</div>
<div style="left:17.8px;top:424.06px;width:6.7px;height:0.6px;background:#cfcfcf"></div>
<svg style="left:25.2px;top:420.16px" width="8.8" height="8.4" viewBox="0 0 20 20"><circle cx="10" cy="10" r="8.200" fill="#fff6ee" stroke="#6a3010" stroke-width="2.600"/></svg>
<div class="t" style="left:36.9px;top:421.16px;">obj_explosion2</div>
<div style="left:17.8px;top:433.21px;width:6.7px;height:0.6px;background:#cfcfcf"></div>
<div style="left:28.8px;top:432.91px;width:1.4px;height:1.3px;background:#e08020;border-radius:50%"></div>
<div class="t" style="left:36.9px;top:430.31px;">obj_enemybullet1</div>
<div style="left:17.8px;top:442.35px;width:6.7px;height:0.6px;background:#cfcfcf"></div>
<div style="left:28.7px;top:441.85px;width:1.7px;height:1.7px;background:#5a3a10;border-radius:50%"></div>
<div class="t" style="left:36.9px;top:439.45px;">obj_enemybullet2</div>
<div style="left:10.4px;top:451.49px;width:2.6px;height:0.6px;background:#cfcfcf"></div>
<div style="left:5.1px;top:449.19px;width:5.2px;height:5.2px;border:0.6px solid #8aa0c0;background:#fff;border-radius:0.5px"></div>
<div style="left:6.3px;top:451.49px;width:2.8px;height:0.6px;background:#333"></div>
<svg style="left:13px;top:448.19px" width="9.2" height="7.4" viewBox="0 0 18 15"><path d="M0.600 2.500h5.500l1.500 2h9.800v9.600h-16.800z" fill="#f2cf55" stroke="#b08a1a" stroke-width="1"/><path d="M0.600 14.100l2.200-7h15l-2.400 7z" fill="#fbe897" stroke="#b08a1a" stroke-width="0.900"/></svg>
<div class="t b" style="left:25.8px;top:448.59px;font-size:6.5px;">Rooms</div>
<div style="left:17.8px;top:460.64px;width:6.7px;height:0.6px;background:#cfcfcf"></div>
<svg style="left:25.8px;top:457.54px" width="7.6" height="6.8" viewBox="0 0 18 16"><defs><linearGradient id="rmg" x1="0" y1="0" x2="1" y2="1"><stop offset="0" stop-color="#fff"/><stop offset="1" stop-color="#c4dcfc"/></linearGradient></defs><rect x="0.8" y="0.8" width="16.4" height="14.4" fill="url(#rmg)" stroke="#2858c8" stroke-width="1.500"/><rect x="1.400" y="1.400" width="15.2" height="1.200" fill="#2858c8"/></svg>
<div class="t" style="left:36.9px;top:457.74px;">rm_main</div>
<div style="left:8px;top:469.78px;width:5px;height:0.6px;background:#cfcfcf"></div>
<svg style="left:14px;top:465.78px" width="6.8" height="8.6" viewBox="0 0 14 17"><path d="M0.600 0.600h9l3.800 3.800v12h-12.800z" fill="#eaf0fc" stroke="#6080b8" stroke-width="1"/><rect x="5.600" y="7.500" width="2.600" height="6" fill="#1838c8"/><circle cx="6.900" cy="4.800" r="1.600" fill="#1838c8"/></svg>
<div class="t" style="left:25.8px;top:466.88px;">Game Information</div>
<div style="left:8px;top:478.92px;width:5px;height:0.6px;background:#cfcfcf"></div>
<svg style="left:14px;top:474.92px" width="6.8" height="8.6" viewBox="0 0 14 17"><path d="M0.600 0.600h9l3.800 3.800v12h-12.800z" fill="#eaf0fc" stroke="#6080b8" stroke-width="1"/><path d="M2.500 9l3 3.500 5-7" fill="none" stroke="#e01818" stroke-width="2.200"/></svg>
<div class="t" style="left:25.8px;top:476.02px;">Global Game Settings</div>
<div style="left:95px;top:44.1px;width:705px;height:503px;overflow:hidden">
<div style="left:-32.7px;top:50.9px;width:180px;height:22px;line-height:22px;text-align:center;white-space:nowrap;font-weight:bold;font-size:17.4px;letter-spacing:0.9px;color:rgba(255,255,255,0.42);text-shadow:0.7px 0.7px 0.6px rgba(0,0,0,0.06);transform:rotate(-45deg)">GAME MAKER</div>
<div style="left:81.1px;top:50.9px;width:180px;height:22px;line-height:22px;text-align:center;white-space:nowrap;font-weight:bold;font-size:17.4px;letter-spacing:0.9px;color:rgba(255,255,255,0.42);text-shadow:0.7px 0.7px 0.6px rgba(0,0,0,0.06);transform:rotate(-45deg)">GAME MAKER</div>
<div style="left:194.9px;top:50.9px;width:180px;height:22px;line-height:22px;text-align:center;white-space:nowrap;font-weight:bold;font-size:17.4px;letter-spacing:0.9px;color:rgba(255,255,255,0.42);text-shadow:0.7px 0.7px 0.6px rgba(0,0,0,0.06);transform:rotate(-45deg)">GAME MAKER</div>
<div style="left:308.7px;top:50.9px;width:180px;height:22px;line-height:22px;text-align:center;white-space:nowrap;font-weight:bold;font-size:17.4px;letter-spacing:0.9px;color:rgba(255,255,255,0.42);text-shadow:0.7px 0.7px 0.6px rgba(0,0,0,0.06);transform:rotate(-45deg)">GAME MAKER</div>
<div style="left:422.5px;top:50.9px;width:180px;height:22px;line-height:22px;text-align:center;white-space:nowrap;font-weight:bold;font-size:17.4px;letter-spacing:0.9px;color:rgba(255,255,255,0.42);text-shadow:0.7px 0.7px 0.6px rgba(0,0,0,0.06);transform:rotate(-45deg)">GAME MAKER</div>
<div style="left:536.3px;top:50.9px;width:180px;height:22px;line-height:22px;text-align:center;white-space:nowrap;font-weight:bold;font-size:17.4px;letter-spacing:0.9px;color:rgba(255,255,255,0.42);text-shadow:0.7px 0.7px 0.6px rgba(0,0,0,0.06);transform:rotate(-45deg)">GAME MAKER</div>
<div style="left:650.1px;top:50.9px;width:180px;height:22px;line-height:22px;text-align:center;white-space:nowrap;font-weight:bold;font-size:17.4px;letter-spacing:0.9px;color:rgba(255,255,255,0.42);text-shadow:0.7px 0.7px 0.6px rgba(0,0,0,0.06);transform:rotate(-45deg)">GAME MAKER</div>
<div style="left:-32.7px;top:165.1px;width:180px;height:22px;line-height:22px;text-align:center;white-space:nowrap;font-weight:bold;font-size:17.4px;letter-spacing:0.9px;color:rgba(255,255,255,0.42);text-shadow:0.7px 0.7px 0.6px rgba(0,0,0,0.06);transform:rotate(-45deg)">GAME MAKER</div>
<div style="left:81.1px;top:165.1px;width:180px;height:22px;line-height:22px;text-align:center;white-space:nowrap;font-weight:bold;font-size:17.4px;letter-spacing:0.9px;color:rgba(255,255,255,0.42);text-shadow:0.7px 0.7px 0.6px rgba(0,0,0,0.06);transform:rotate(-45deg)">GAME MAKER</div>
<div style="left:194.9px;top:165.1px;width:180px;height:22px;line-height:22px;text-align:center;white-space:nowrap;font-weight:bold;font-size:17.4px;letter-spacing:0.9px;color:rgba(255,255,255,0.42);text-shadow:0.7px 0.7px 0.6px rgba(0,0,0,0.06);transform:rotate(-45deg)">GAME MAKER</div>
<div style="left:308.7px;top:165.1px;width:180px;height:22px;line-height:22px;text-align:center;white-space:nowrap;font-weight:bold;font-size:17.4px;letter-spacing:0.9px;color:rgba(255,255,255,0.42);text-shadow:0.7px 0.7px 0.6px rgba(0,0,0,0.06);transform:rotate(-45deg)">GAME MAKER</div>
<div style="left:422.5px;top:165.1px;width:180px;height:22px;line-height:22px;text-align:center;white-space:nowrap;font-weight:bold;font-size:17.4px;letter-spacing:0.9px;color:rgba(255,255,255,0.42);text-shadow:0.7px 0.7px 0.6px rgba(0,0,0,0.06);transform:rotate(-45deg)">GAME MAKER</div>
<div style="left:536.3px;top:165.1px;width:180px;height:22px;line-height:22px;text-align:center;white-space:nowrap;font-weight:bold;font-size:17.4px;letter-spacing:0.9px;color:rgba(255,255,255,0.42);text-shadow:0.7px 0.7px 0.6px rgba(0,0,0,0.06);transform:rotate(-45deg)">GAME MAKER</div>
<div style="left:650.1px;top:165.1px;width:180px;height:22px;line-height:22px;text-align:center;white-space:nowrap;font-weight:bold;font-size:17.4px;letter-spacing:0.9px;color:rgba(255,255,255,0.42);text-shadow:0.7px 0.7px 0.6px rgba(0,0,0,0.06);transform:rotate(-45deg)">GAME MAKER</div>
<div style="left:-32.7px;top:279.3px;width:180px;height:22px;line-height:22px;text-align:center;white-space:nowrap;font-weight:bold;font-size:17.4px;letter-spacing:0.9px;color:rgba(255,255,255,0.42);text-shadow:0.7px 0.7px 0.6px rgba(0,0,0,0.06);transform:rotate(-45deg)">GAME MAKER</div>
<div style="left:81.1px;top:279.3px;width:180px;height:22px;line-height:22px;text-align:center;white-space:nowrap;font-weight:bold;font-size:17.4px;letter-spacing:0.9px;color:rgba(255,255,255,0.42);text-shadow:0.7px 0.7px 0.6px rgba(0,0,0,0.06);transform:rotate(-45deg)">GAME MAKER</div>
<div style="left:194.9px;top:279.3px;width:180px;height:22px;line-height:22px;text-align:center;white-space:nowrap;font-weight:bold;font-size:17.4px;letter-spacing:0.9px;color:rgba(255,255,255,0.42);text-shadow:0.7px 0.7px 0.6px rgba(0,0,0,0.06);transform:rotate(-45deg)">GAME MAKER</div>
<div style="left:308.7px;top:279.3px;width:180px;height:22px;line-height:22px;text-align:center;white-space:nowrap;font-weight:bold;font-size:17.4px;letter-spacing:0.9px;color:rgba(255,255,255,0.42);text-shadow:0.7px 0.7px 0.6px rgba(0,0,0,0.06);transform:rotate(-45deg)">GAME MAKER</div>
<div style="left:422.5px;top:279.3px;width:180px;height:22px;line-height:22px;text-align:center;white-space:nowrap;font-weight:bold;font-size:17.4px;letter-spacing:0.9px;color:rgba(255,255,255,0.42);text-shadow:0.7px 0.7px 0.6px rgba(0,0,0,0.06);transform:rotate(-45deg)">GAME MAKER</div>
<div style="left:536.3px;top:279.3px;width:180px;height:22px;line-height:22px;text-align:center;white-space:nowrap;font-weight:bold;font-size:17.4px;letter-spacing:0.9px;color:rgba(255,255,255,0.42);text-shadow:0.7px 0.7px 0.6px rgba(0,0,0,0.06);transform:rotate(-45deg)">GAME MAKER</div>
<div style="left:650.1px;top:279.3px;width:180px;height:22px;line-height:22px;text-align:center;white-space:nowrap;font-weight:bold;font-size:17.4px;letter-spacing:0.9px;color:rgba(255,255,255,0.42);text-shadow:0.7px 0.7px 0.6px rgba(0,0,0,0.06);transform:rotate(-45deg)">GAME MAKER</div>
<div style="left:-32.7px;top:393.5px;width:180px;height:22px;line-height:22px;text-align:center;white-space:nowrap;font-weight:bold;font-size:17.4px;letter-spacing:0.9px;color:rgba(255,255,255,0.42);text-shadow:0.7px 0.7px 0.6px rgba(0,0,0,0.06);transform:rotate(-45deg)">GAME MAKER</div>
<div style="left:81.1px;top:393.5px;width:180px;height:22px;line-height:22px;text-align:center;white-space:nowrap;font-weight:bold;font-size:17.4px;letter-spacing:0.9px;color:rgba(255,255,255,0.42);text-shadow:0.7px 0.7px 0.6px rgba(0,0,0,0.06);transform:rotate(-45deg)">GAME MAKER</div>
<div style="left:194.9px;top:393.5px;width:180px;height:22px;line-height:22px;text-align:center;white-space:nowrap;font-weight:bold;font-size:17.4px;letter-spacing:0.9px;color:rgba(255,255,255,0.42);text-shadow:0.7px 0.7px 0.6px rgba(0,0,0,0.06);transform:rotate(-45deg)">GAME MAKER</div>
<div style="left:308.7px;top:393.5px;width:180px;height:22px;line-height:22px;text-align:center;white-space:nowrap;font-weight:bold;font-size:17.4px;letter-spacing:0.9px;color:rgba(255,255,255,0.42);text-shadow:0.7px 0.7px 0.6px rgba(0,0,0,0.06);transform:rotate(-45deg)">GAME MAKER</div>
<div style="left:422.5px;top:393.5px;width:180px;height:22px;line-height:22px;text-align:center;white-space:nowrap;font-weight:bold;font-size:17.4px;letter-spacing:0.9px;color:rgba(255,255,255,0.42);text-shadow:0.7px 0.7px 0.6px rgba(0,0,0,0.06);transform:rotate(-45deg)">GAME MAKER</div>
<div style="left:536.3px;top:393.5px;width:180px;height:22px;line-height:22px;text-align:center;white-space:nowrap;font-weight:bold;font-size:17.4px;letter-spacing:0.9px;color:rgba(255,255,255,0.42);text-shadow:0.7px 0.7px 0.6px rgba(0,0,0,0.06);transform:rotate(-45deg)">GAME MAKER</div>
<div style="left:650.1px;top:393.5px;width:180px;height:22px;line-height:22px;text-align:center;white-space:nowrap;font-weight:bold;font-size:17.4px;letter-spacing:0.9px;color:rgba(255,255,255,0.42);text-shadow:0.7px 0.7px 0.6px rgba(0,0,0,0.06);transform:rotate(-45deg)">GAME MAKER</div>
<div style="left:-32.7px;top:507.7px;width:180px;height:22px;line-height:22px;text-align:center;white-space:nowrap;font-weight:bold;font-size:17.4px;letter-spacing:0.9px;color:rgba(255,255,255,0.42);text-shadow:0.7px 0.7px 0.6px rgba(0,0,0,0.06);transform:rotate(-45deg)">GAME MAKER</div>
<div style="left:81.1px;top:507.7px;width:180px;height:22px;line-height:22px;text-align:center;white-space:nowrap;font-weight:bold;font-size:17.4px;letter-spacing:0.9px;color:rgba(255,255,255,0.42);text-shadow:0.7px 0.7px 0.6px rgba(0,0,0,0.06);transform:rotate(-45deg)">GAME MAKER</div>
<div style="left:194.9px;top:507.7px;width:180px;height:22px;line-height:22px;text-align:center;white-space:nowrap;font-weight:bold;font-size:17.4px;letter-spacing:0.9px;color:rgba(255,255,255,0.42);text-shadow:0.7px 0.7px 0.6px rgba(0,0,0,0.06);transform:rotate(-45deg)">GAME MAKER</div>
<div style="left:308.7px;top:507.7px;width:180px;height:22px;line-height:22px;text-align:center;white-space:nowrap;font-weight:bold;font-size:17.4px;letter-spacing:0.9px;color:rgba(255,255,255,0.42);text-shadow:0.7px 0.7px 0.6px rgba(0,0,0,0.06);transform:rotate(-45deg)">GAME MAKER</div>
<div style="left:422.5px;top:507.7px;width:180px;height:22px;line-height:22px;text-align:center;white-space:nowrap;font-weight:bold;font-size:17.4px;letter-spacing:0.9px;color:rgba(255,255,255,0.42);text-shadow:0.7px 0.7px 0.6px rgba(0,0,0,0.06);transform:rotate(-45deg)">GAME MAKER</div>
<div style="left:536.3px;top:507.7px;width:180px;height:22px;line-height:22px;text-align:center;white-space:nowrap;font-weight:bold;font-size:17.4px;letter-spacing:0.9px;color:rgba(255,255,255,0.42);text-shadow:0.7px 0.7px 0.6px rgba(0,0,0,0.06);transform:rotate(-45deg)">GAME MAKER</div>
<div style="left:650.1px;top:507.7px;width:180px;height:22px;line-height:22px;text-align:center;white-space:nowrap;font-weight:bold;font-size:17.4px;letter-spacing:0.9px;color:rgba(255,255,255,0.42);text-shadow:0.7px 0.7px 0.6px rgba(0,0,0,0.06);transform:rotate(-45deg)">GAME MAKER</div>
</div>
<div style="left:96.5px;top:60.5px;width:476.3px;height:311.1px;background:#ece9d8"></div>
<svg style="left:0;top:0" width="800" height="547" viewBox="0 0 800 547"><defs><linearGradient id="tga" x1="0" y1="0" x2="0" y2="1"><stop offset="0%" stop-color="#0058ee"/><stop offset="4%" stop-color="#3593ff"/><stop offset="8%" stop-color="#288eff"/><stop offset="12%" stop-color="#127dff"/><stop offset="16%" stop-color="#036ffc"/><stop offset="22%" stop-color="#0262ee"/><stop offset="30%" stop-color="#0057e5"/><stop offset="40%" stop-color="#0054e3"/><stop offset="56%" stop-color="#0055eb"/><stop offset="66%" stop-color="#005bf5"/><stop offset="76%" stop-color="#026afe"/><stop offset="86%" stop-color="#0062ef"/><stop offset="92%" stop-color="#0052d6"/><stop offset="96%" stop-color="#0040ab"/><stop offset="100%" stop-color="#003092"/></linearGradient><linearGradient id="tgi" x1="0" y1="0" x2="0" y2="1"><stop offset="0%" stop-color="#8ca6ea"/><stop offset="18%" stop-color="#7a97e0"/><stop offset="55%" stop-color="#7a96df"/><stop offset="80%" stop-color="#83a2e6"/><stop offset="100%" stop-color="#86a8ea"/></linearGradient></defs><path d="M95.5 372.6V48.8A4.2 4.2 0 0 1 99.7 44.6H569.6A4.2 4.2 0 0 1 573.8 48.8V372.6zM97.7 61.5H571.6V370.4H97.7z" fill="#6f7ed9" fill-rule="evenodd"/><path d="M96.3 61.5V48.8A3.4 3.4 0 0 1 99.7 45H569.6A3.4 3.4 0 0 1 573 48.8V61.5z" fill="url(#tgi)"/></svg>
<div class="tt" style="left:109.4px;top:49.35px;font-size:7.2px;color:rgba(255,255,255,0.9);">Room Properties</div>
<div style="left:559.2px;top:47.7px;width:11.3px;height:11.4px;background:linear-gradient(135deg,#c8788c,#b45c74 50%,#a85068);border:0.7px solid rgba(255,255,255,0.72);border-radius:1.6px"></div>
<svg style="left:561.8px;top:50.35px" width="6.1" height="6.1" viewBox="0 0 10 10"><path d="M0.5 0.5L9.5 9.5M9.5 0.5L0.5 9.5" stroke="#fff" stroke-width="2" stroke-linecap="square"/></svg>
<div style="left:546px;top:47.7px;width:11.3px;height:11.4px;background:linear-gradient(135deg,#6a88ea,#4060d4 50%,#3a56cc);border:0.7px solid rgba(255,255,255,0.72);border-radius:1.6px"></div>
<div style="left:548.26px;top:50.21px;width:6.78px;height:6.38px;border:0.5px solid #fff;border-top-width:1.2px"></div>
<div style="left:532.8px;top:47.7px;width:11.3px;height:11.4px;background:linear-gradient(135deg,#6a88ea,#4060d4 50%,#3a56cc);border:0.7px solid rgba(255,255,255,0.72);border-radius:1.6px"></div>
<div style="left:535.29px;top:54.77px;width:4.07px;height:2.05px;background:#fff"></div>
<svg style="left:99.6px;top:49.6px" width="6.4" height="7.4" viewBox="0 0 13 15"><rect x="0.600" y="0.600" width="11.800" height="13.800" fill="#fff" stroke="#3a58c0" stroke-width="1.200"/><rect x="2.500" y="4" width="7" height="5" fill="#3a58c0"/><rect x="3.600" y="5.200" width="4.800" height="1.400" fill="#fff"/></svg>
<div style="left:97.7px;top:61.5px;width:473.9px;height:15.7px;background:#ece9d8;border-bottom:0.6px solid #c4c0b0"></div>
<svg style="left:101.8px;top:65.4px" width="9.2" height="7.6" viewBox="0 0 18 15"><path d="M1.500 8l5 5.500L17 2" fill="none" stroke="#0f7a0f" stroke-width="3.400" stroke-linejoin="miter"/><path d="M1.500 8l5 5.500L17 2" fill="none" stroke="#2cb82c" stroke-width="2"/></svg>
<div style="left:115.2px;top:63.5px;width:1.2px;height:11.5px;border-left:0.6px solid #c8c4b2;border-right:0.6px solid #f8f7f0"></div>
<div style="left:132.8px;top:63.5px;width:1.2px;height:11.5px;border-left:0.6px solid #c8c4b2;border-right:0.6px solid #f8f7f0"></div>
<div style="left:215.6px;top:63.5px;width:1.2px;height:11.5px;border-left:0.6px solid #c8c4b2;border-right:0.6px solid #f8f7f0"></div>
<div style="left:302.8px;top:63.5px;width:1.2px;height:11.5px;border-left:0.6px solid #c8c4b2;border-right:0.6px solid #f8f7f0"></div>
<div style="left:332.8px;top:63.5px;width:1.2px;height:11.5px;border-left:0.6px solid #c8c4b2;border-right:0.6px solid #f8f7f0"></div>
<svg style="left:119.2px;top:65.2px" width="8.8" height="8" viewBox="0 0 18 16"><path d="M5.500 7.500C9 2.500 15.500 4.500 15.500 9.500c0 3.500-3 5.500-7 5" fill="none" stroke="#1858d8" stroke-width="3.400"/><path d="M0.500 1.500l1.200 10 9-4z" fill="#1858d8"/></svg>
<svg style="left:138.27px;top:64.69px" width="7.06" height="9.02" viewBox="0 0 14 18"><defs><linearGradient id="pg" x1="0" y1="0" x2="1" y2="1"><stop offset="0" stop-color="#fff"/><stop offset="1" stop-color="#b8cef0"/></linearGradient></defs><path d="M0.6 0.6h9l3.8 3.8v13h-12.8z" fill="url(#pg)" stroke="#7088b8" stroke-width="1.1"/><path d="M9.6 0.6v3.8h3.8" fill="#e6eefc" stroke="#7088b8" stroke-width="1"/></svg>
<svg style="left:151px;top:65.6px" width="8" height="7.2" viewBox="0 0 16 14"><g transform="rotate(0 8 7)"><path d="M1 4.800h7.500V1L15.200 7L8.500 13V9.200H1z" fill="#1a5ae0" stroke="#0a2a90" stroke-width="0.900"/></g></svg>
<svg style="left:163.5px;top:64.8px" width="9" height="8.8" viewBox="0 0 18 18"><circle cx="4" cy="4.500" r="3.200" fill="#18a018"/><circle cx="14" cy="4.500" r="3.200" fill="#18a018"/><path d="M7.500 4.500h3" stroke="#18a018" stroke-width="1.200"/><path d="M3 13.500h12" stroke="#1848c8" stroke-width="1.200"/><path d="M1 13.500l3.500-2.800v5.600zM17 13.500l-3.500-2.800v5.600zM9 13.500l-2.500-2v4zM9 13.500l2.500-2v4z" fill="#1848c8"/></svg>
<svg style="left:177px;top:64.8px" width="9" height="8.8" viewBox="0 0 18 18"><circle cx="13.500" cy="4" r="3.200" fill="#18a018"/><circle cx="13.500" cy="14" r="3.200" fill="#18a018"/><path d="M13.500 7.500v3" stroke="#18a018" stroke-width="1.200"/><path d="M4.500 3v12" stroke="#1848c8" stroke-width="1.200"/><path d="M4.500 1l-2.800 3.500h5.600zM4.500 17l-2.800-3.500h5.600zM4.500 9l-2-2.500h4zM4.500 9l-2 2.500h4z" fill="#1848c8"/></svg>
<svg style="left:191.2px;top:64.8px" width="6.6" height="8.6" viewBox="0 0 15 19"><path d="M4.500 8V5c0-4 7-4 7 0v3" fill="none" stroke="#c89018" stroke-width="2"/><rect x="2.500" y="8" width="11" height="9.500" rx="2.400" fill="#ecc458" stroke="#b88a28" stroke-width="1"/><rect x="4" y="9.500" width="3.500" height="6" fill="#fdf0b0"/></svg>
<svg style="left:204.4px;top:64.8px" width="6.6" height="8.6" viewBox="0 0 15 19"><path d="M2 7V4c0-4 7-4 7 0v4" fill="none" stroke="#c89018" stroke-width="2"/><rect x="2.500" y="8" width="11" height="9.500" rx="2.400" fill="#ecc458" stroke="#b88a28" stroke-width="1"/><rect x="4" y="9.500" width="3.500" height="6" fill="#fdf0b0"/></svg>
<div class="t" style="left:217.8px;top:66px;">Snap <u>X</u>:</div>
<div class="fld" style="left:241.2px;top:63.2px;width:16.4px;height:11.8px;"></div>
<div class="t" style="left:243.4px;top:65.8px;font-size:6.4px;">16</div>
<div class="t" style="left:261.2px;top:66px;">Snap <u>Y</u>:</div>
<div class="fld" style="left:285px;top:63.2px;width:15.6px;height:11.8px;"></div>
<div class="t" style="left:287.2px;top:65.8px;font-size:6.4px;">16</div>
<div style="left:305.4px;top:63.4px;width:12.2px;height:11.6px;border:0.6px solid #7a98cc;border-radius:1.500px;background:#fff"></div>
<svg style="left:307.6px;top:65.4px" width="7.8" height="7.6" viewBox="0 0 16 16"><rect x="0.700" y="0.700" width="14.600" height="14.600" fill="#eef2ff" stroke="#2848b8" stroke-width="1.400"/><path d="M5.600 1v14M10.400 1v14M1 5.600h14M1 10.400h14" stroke="#2848b8" stroke-width="1.100"/></svg>
<svg style="left:320.4px;top:65.2px" width="9" height="8" viewBox="0 0 18 16"><path d="M1 2l16 12M1 14L17 2M1 8h16M5 1l8 14M13 1L5 15" stroke="#4a78c8" stroke-width="1" fill="none"/></svg>
<svg style="left:337.8px;top:64.4px" width="9.6" height="9.6" viewBox="0 0 19 19"><path d="M2 17.500L9 10" stroke="#c89828" stroke-width="3.200" stroke-linecap="round"/><circle cx="12" cy="7" r="5.400" fill="#d8ecff" stroke="#5a88c8" stroke-width="1.600"/></svg>
<svg style="left:350.8px;top:68.4px" width="3.4" height="2" viewBox="0 0 7 4"><path d="M0 0h7l-3.500 4z" fill="#000"/></svg>
<div style="left:97.7px;top:77.2px;width:102.7px;height:282px;background:#ece9d8"></div>
<div style="left:99.8px;top:80.4px;width:56.4px;height:9.8px;background:linear-gradient(#fff,#f4f3ee 70%,#e6e4d8);border:0.5px solid #a2aaaa;border-bottom:none;border-radius:1.800px 1.800px 0 0"></div>
<div class="t" style="left:99.8px;top:82.5px;width:56.4px;text-align:center;">backgrounds</div>
<div style="left:157.6px;top:80.4px;width:37px;height:9.8px;background:linear-gradient(#fff,#f4f3ee 70%,#e6e4d8);border:0.5px solid #a2aaaa;border-bottom:none;border-radius:1.800px 1.800px 0 0"></div>
<div class="t" style="left:157.6px;top:82.5px;width:37px;text-align:center;">views</div>
<div style="left:98.8px;top:100px;width:96.6px;height:257.8px;background:#fbfbf8;border:0.6px solid #919b9c"></div>
<div style="left:99.4px;top:100.6px;width:95.4px;height:256.6px;background:#ece9d8"></div>
<div style="left:133.6px;top:91.2px;width:31.2px;height:8.8px;background:linear-gradient(#fff,#f4f3ee 70%,#e6e4d8);border:0.5px solid #a2aaaa;border-bottom:none;border-radius:1.800px 1.800px 0 0"></div>
<div class="t" style="left:133.6px;top:92.8px;width:31.2px;text-align:center;">settings</div>
<div style="left:166.2px;top:91.2px;width:28.4px;height:8.8px;background:linear-gradient(#fff,#f4f3ee 70%,#e6e4d8);border:0.5px solid #a2aaaa;border-bottom:none;border-radius:1.800px 1.800px 0 0"></div>
<div class="t" style="left:166.2px;top:92.8px;width:28.4px;text-align:center;">tiles</div>
<div style="left:98.8px;top:89.4px;width:33.8px;height:11.6px;background:#fcfcfa;border:0.6px solid #919b9c;border-bottom:none;border-radius:1.800px 1.800px 0 0;border-top:1.300px solid #e68b2c"></div>
<div class="t" style="left:98.8px;top:91.9px;width:33.8px;text-align:center;">objects</div>
<div style="left:101.2px;top:103px;width:93.2px;height:157.4px;background:#ece9d8;border:0.6px solid #8a8878;border-right-color:#fff;border-bottom-color:#fff"></div>
<div style="left:101.8px;top:103.8px;width:18.2px;height:18.2px;background:#0a48b4"></div>
<svg style="left:101.8px;top:103.8px" width="18.2" height="18.2" viewBox="0 0 36 36"><rect x="3" y="9.500" width="30" height="5" rx="2.400" fill="#3aa4f4"/><rect x="15.600" y="2" width="4.800" height="30" rx="2.200" fill="#2e8ce4"/><rect x="11" y="27.500" width="14" height="3.400" rx="1.600" fill="#3aa4f4"/><circle cx="8.500" cy="12" r="2.200" fill="#c8ecff"/><circle cx="27.500" cy="12" r="2.200" fill="#c8ecff"/><rect x="16.600" y="6" width="2.800" height="6" rx="1.200" fill="#bfe6ff"/><path d="M18 0v36M0 18h36" stroke="#a89878" stroke-width="1.400"/></svg>
<div style="left:100.2px;top:262.6px;width:94.4px;height:0.6px;background:#c8c4b4"></div>
<div class="t" style="left:105.6px;top:266.2px;">Object to add with left mouse:</div>
<div class="fldd" style="left:109.8px;top:279.4px;width:58.6px;height:10.8px;"></div>
<div class="t" style="left:112px;top:281.6px;">obj_enemy4</div>
<svg style="left:172.8px;top:280.6px" width="8" height="8" viewBox="0 0 16 16"><rect x="0.600" y="0.600" width="12" height="11" fill="#dfe8fa" stroke="#5a80c0" stroke-width="1"/><rect x="0.600" y="0.600" width="12" height="3" fill="#3a68c8"/><path d="M3 7h7M3 9.500h7" stroke="#6a88c0" stroke-width="1"/><path d="M9 10l6 5" stroke="#4a70b8" stroke-width="1.800"/></svg>
<div class="t" style="left:109.6px;top:295.6px;font-family:'Liberation Serif',serif;font-style:italic;font-size:6.55px;">Left mouse button = add</div>
<div class="t" style="left:115.2px;top:303.8px;font-family:'Liberation Serif',serif;font-style:italic;font-size:6.55px;">+ &lt;Alt&gt; = no snap</div>
<div class="t" style="left:115.2px;top:311.8px;font-family:'Liberation Serif',serif;font-style:italic;font-size:6.55px;">+ &lt;Shift&gt; = multiple</div>
<div class="t" style="left:115.2px;top:319.8px;font-family:'Liberation Serif',serif;font-style:italic;font-size:6.55px;">+ &lt;Ctrl&gt; = move</div>
<div style="left:200.4px;top:77.2px;width:371.2px;height:282px;background:#ece9d8"></div>
<svg style="left:200.0px;top:78.0px" width="367" height="275" viewBox="0 0 367 275"><defs><filter id="wn" x="0" y="0" width="100%" height="100%" color-interpolation-filters="sRGB"><feTurbulence type="fractalNoise" baseFrequency="0.45" numOctaves="2" seed="3" result="n"/><feColorMatrix in="n" type="matrix" values="0 0 0 0 0.02  0 0 0 0 0.2  0 0 0 0 0.62  1.1 0 0 0 -0.4"/><feComposite operator="over" in2="SourceGraphic"/></filter></defs><rect width="367" height="275" fill="#0b58ca" filter="url(#wn)"/></svg>
<div style="left:97.7px;top:358.8px;width:473.9px;height:11.6px;background:#ece9d8;border-top:0.6px solid #b4b0a0"></div>
<svg style="left:201.5px;top:78.9px" width="7.8" height="7.8" viewBox="0 0 20 20"><defs><radialGradient id="bg1" cx="0.38" cy="0.3" r="0.75"><stop offset="0" stop-color="#7aa0ff"/><stop offset="0.4" stop-color="#1030e8"/><stop offset="1" stop-color="#000878"/></radialGradient></defs><circle cx="10" cy="10" r="9.600" fill="url(#bg1)"/></svg>
<div class="t b" style="left:203.7px;top:78.6px;font-size:6.400px;color:#e81818">?</div>
<svg style="left:228.7px;top:88px" width="7.8" height="7.8" viewBox="0 0 20 20"><defs><radialGradient id="bg1" cx="0.38" cy="0.3" r="0.75"><stop offset="0" stop-color="#7aa0ff"/><stop offset="0.4" stop-color="#1030e8"/><stop offset="1" stop-color="#000878"/></radialGradient></defs><circle cx="10" cy="10" r="9.600" fill="url(#bg1)"/></svg>
<div class="t b" style="left:230.9px;top:87.7px;font-size:6.400px;color:#e81818">?</div>
<svg style="left:365px;top:260.9px" width="37.14" height="37.14" viewBox="0 0 65 65"><defs><linearGradient id="pw" x1="0" y1="0" x2="0" y2="1"><stop offset="0" stop-color="#f8dc98"/><stop offset="0.45" stop-color="#e0a444"/><stop offset="1" stop-color="#a06418"/></linearGradient><linearGradient id="pf" x1="0" y1="0" x2="1" y2="0"><stop offset="0" stop-color="#a86c1c"/><stop offset="0.35" stop-color="#f8d890"/><stop offset="0.65" stop-color="#e0a040"/><stop offset="1" stop-color="#a0641a"/></linearGradient></defs><path d="M4 27c0-4 6-6.500 14-6.500h29c8 0 14 2.500 14 6.500s-5 6-12 6H16c-7 0-12-2-12-6z" fill="url(#pw)" stroke="#6a4010" stroke-width="0.700"/><path d="M18.700 20c0-3.500 6.300-3.500 6.300 0l-1 33c0 1.600-4.300 1.600-4.300 0z" fill="url(#pf)" stroke="#6a4010" stroke-width="0.600"/><path d="M40 20c0-3.500 6.300-3.500 6.300 0l-1 33c0 1.600-4.300 1.600-4.300 0z" fill="url(#pf)" stroke="#6a4010" stroke-width="0.600"/><path d="M28.500 18c0-6 7.300-6 7.300 0v17c0 5-7.300 5-7.300 0z" fill="url(#pf)" stroke="#6a4010" stroke-width="0.600"/><rect x="30.200" y="20.200" width="4" height="7.300" rx="1.800" fill="#d8f6fc" stroke="#4a98a8" stroke-width="0.700"/><rect x="14.600" y="46.400" width="35.100" height="6.300" rx="3.100" fill="url(#pw)" stroke="#6a4010" stroke-width="0.700"/><circle cx="12.600" cy="26.500" r="2" fill="#e8eefc"/><circle cx="12.600" cy="26.500" r="1.100" fill="#2848b8"/><circle cx="52" cy="26.500" r="2" fill="#e8eefc"/><circle cx="52" cy="26.500" r="1.100" fill="#2848b8"/><rect x="20.600" y="29.600" width="2.600" height="3.600" fill="#3a3a40"/><rect x="41.900" y="29.600" width="2.600" height="3.600" fill="#3a3a40"/><path d="M16.800 17.300h10M38.200 17.300h10" stroke="#f0f0f0" stroke-width="0.900"/><circle cx="22.600" cy="17.200" r="1.300" fill="#e03020"/><circle cx="43.900" cy="17.200" r="1.300" fill="#e03020"/></svg>
<svg style="left:0;top:0" width="800" height="547" viewBox="0 0 800 547"><defs><filter id="mot" x="0" y="0" width="100%" height="100%" color-interpolation-filters="sRGB"><feTurbulence type="fractalNoise" baseFrequency="0.5" numOctaves="2" seed="7" result="n"/><feColorMatrix in="n" type="matrix" values="0 0 0 0 0  0 0 0 0 0  0 0 0 0 0  1.8 0 0 0 -0.7" result="m"/><feComposite in="m" in2="SourceGraphic" operator="in" result="mm"/><feMerge><feMergeNode in="SourceGraphic"/><feMergeNode in="mm"/></feMerge></filter></defs><polygon points="405.5,100.0 410.5,99.1 416.5,98.7 419.7,101.9 425.1,102.8 429.7,104.6 431.5,109.6 435.2,112.8 437.9,117.4 437.5,122.0 433.4,125.6 429.7,127.4 425.1,125.2 421.5,129.3 416.9,131.1 411.4,128.4 406.0,127.4 403.2,122.9 402.8,117.4 404.6,111.9 405.5,106.4" fill="#a6a6a2" stroke="#8e8e8a" stroke-width="0.8" stroke-linejoin="round" filter="url(#mot)"/><polygon points="407.8,106.4 413.3,105.5 416.5,101.9 418.9,107.4 425.1,108.3 428.8,112.8 432.6,117.4 428.8,121.1 423.3,123.8 417.8,126.5 413.3,127.6 408.7,123.8 406.9,117.4 407.8,111.9" fill="#4a7a48" filter="url(#mot)"/><polygon points="411.4,108.3 416.0,107.4 417.8,113.7 425.1,111.9 426.1,117.4 420.6,121.1 415.1,122.9 410.5,119.2" fill="#3a6438" opacity="0.7"/><polygon points="239.8,187.2 240.6,183.5 243.5,181.5 247.6,181.9 249.7,184.3 247.6,186.0 244.3,185.6 242.3,187.6" fill="#34622f" stroke="#2a5026" stroke-width="0.6" stroke-linejoin="round"/><polygon points="248.9,192.6 251.3,188.9 256.7,188.0 262.4,189.3 265.7,193.4 264.5,196.7 260.8,198.3 263.2,200.8 261.6,204.9 257.5,206.1 254.2,208.6 249.3,208.2 246.8,204.9 246.4,200.0 248.4,196.7" fill="#2f5c2c" stroke="#284e25" stroke-width="0.8" stroke-linejoin="round" filter="url(#mot)"/><polygon points="250.9,193.4 255.8,190.9 260.8,192.6 260.0,196.7 256.7,199.1 258.3,203.2 253.4,205.7 249.7,203.2 249.7,197.5" fill="#3c6c38" opacity="0.8"/><polygon points="467.1,338.9 469.6,336.3 473.3,336.0 475.5,337.8 479.1,339.3 482.8,340.7 484.3,343.3 484.3,346.9 479.9,349.1 476.9,350.6 474.0,351.3 469.6,349.9 466.7,346.9" fill="#5c3208" stroke="#4a2606" stroke-width="0.8" stroke-linejoin="round"/><ellipse cx="472.9" cy="340.7" rx="2" ry="2.3" fill="#160804"/><path d="M467.4 339.6L467.1 346.6" stroke="#8a5210" stroke-width="1" fill="none"/></svg>
<svg style="left:200.0px;top:78.0px" width="367" height="275" viewBox="0 0 367 275"><path d="M0.5 0V275M10.5 0V275M19.5 0V275M28.5 0V275M37.5 0V275M46.5 0V275M55.5 0V275M64.5 0V275M74.5 0V275M83.5 0V275M92.5 0V275M101.5 0V275M110.5 0V275M119.5 0V275M128.5 0V275M138.5 0V275M147.5 0V275M156.5 0V275M165.5 0V275M174.5 0V275M183.5 0V275M192.5 0V275M202.5 0V275M211.5 0V275M220.5 0V275M229.5 0V275M238.5 0V275M247.5 0V275M256.5 0V275M266.5 0V275M275.5 0V275M284.5 0V275M293.5 0V275M302.5 0V275M311.5 0V275M320.5 0V275M330.5 0V275M339.5 0V275M348.5 0V275M357.5 0V275M366.5 0V275M0 0.5H367M0 9.5H367M0 18.5H367M0 27.5H367M0 36.5H367M0 46.5H367M0 55.5H367M0 64.5H367M0 73.5H367M0 82.5H367M0 91.5H367M0 100.5H367M0 110.5H367M0 119.5H367M0 128.5H367M0 137.5H367M0 146.5H367M0 155.5H367M0 164.5H367M0 174.5H367M0 183.5H367M0 192.5H367M0 201.5H367M0 210.5H367M0 219.5H367M0 228.5H367M0 238.5H367M0 247.5H367M0 256.5H367M0 265.5H367M0 274.5H367" stroke="#83878a" stroke-width="1" fill="none"/><path d="M0.5 0V275M0 0.5H367" stroke="#c8a06c" stroke-width="1" fill="none"/></svg>
<div style="left:470.8px;top:99px;width:311px;height:219.9px;background:#ece9d8"></div>
<svg style="left:0;top:0" width="800" height="547" viewBox="0 0 800 547"><path d="M469.8 319.9V87.3A4.2 4.2 0 0 1 474 83.1H778.6A4.2 4.2 0 0 1 782.8 87.3V319.9zM472.3 100H780.3V317.4H472.3z" fill="#0a34d0" fill-rule="evenodd"/><path d="M470.6 100V87.3A3.4 3.4 0 0 1 474 83.5H778.6A3.4 3.4 0 0 1 782 87.3V100z" fill="url(#tga)"/></svg>
<div class="tt" style="left:484.6px;top:87.85px;font-size:7.2px;">Image Editor</div>
<div style="left:767.7px;top:87.2px;width:11.3px;height:11.4px;background:linear-gradient(135deg,#e8825e,#d0401c 45%,#b83010);border:0.7px solid rgba(255,255,255,0.92);border-radius:1.6px"></div>
<svg style="left:770.3px;top:89.85px" width="6.1" height="6.1" viewBox="0 0 10 10"><path d="M0.5 0.5L9.5 9.5M9.5 0.5L0.5 9.5" stroke="#fff" stroke-width="2" stroke-linecap="square"/></svg>
<div style="left:754.5px;top:87.2px;width:11.3px;height:11.4px;background:linear-gradient(135deg,#5a8af8,#2458e0 45%,#1848c8);border:0.7px solid rgba(255,255,255,0.92);border-radius:1.6px"></div>
<div style="left:756.76px;top:89.71px;width:6.78px;height:6.38px;border:0.5px solid #fff;border-top-width:1.2px"></div>
<div style="left:741.3px;top:87.2px;width:11.3px;height:11.4px;background:linear-gradient(135deg,#5a8af8,#2458e0 45%,#1848c8);border:0.7px solid rgba(255,255,255,0.92);border-radius:1.6px"></div>
<div style="left:743.79px;top:94.27px;width:4.07px;height:2.05px;background:#fff"></div>
<svg style="left:473.2px;top:87.6px" width="8.6" height="7.6" viewBox="0 0 17 15"><ellipse cx="8.500" cy="7.500" rx="8" ry="7" fill="#f4ecd8" stroke="#8a7a58" stroke-width="0.800"/><circle cx="5" cy="5" r="1.700" fill="#e02020"/><circle cx="9.500" cy="3.800" r="1.700" fill="#20a020"/><circle cx="13" cy="6.500" r="1.700" fill="#2040e0"/><circle cx="5" cy="10" r="1.700" fill="#e0c020"/></svg>
<div style="left:473px;top:100px;width:307px;height:12.2px;background:#ece9d8"></div>
<div style="left:474.2px;top:101.8px;width:10px;height:8px;background:#fbfaf6"></div>
<div class="t" style="left:474.6px;top:102.9px;">File</div>
<div style="left:490.2px;top:101.8px;width:10.8px;height:8px;background:#fbfaf6"></div>
<div class="t" style="left:490.6px;top:102.9px;">Edit</div>
<div style="left:507.6px;top:101.8px;width:13px;height:8px;background:#fbfaf6"></div>
<div class="t" style="left:508px;top:102.9px;">Text</div>
<div style="left:527.2px;top:101.8px;width:27.8px;height:8px;background:#fbfaf6"></div>
<div class="t" style="left:527.6px;top:102.9px;">Transform</div>
<div style="left:562px;top:101.8px;width:16.8px;height:8px;background:#fbfaf6"></div>
<div class="t" style="left:562.4px;top:102.9px;">Image</div>
<div style="left:473px;top:112.2px;width:307px;height:16.4px;background:#ece9d8;border-top:0.6px solid #f8f7f0;border-bottom:0.6px solid #c4c0b0"></div>
<div style="left:472.8px;top:112.8px;width:306.8px;height:15.2px;border:0.6px solid #d8d4c4;border-radius:1px"></div>
<svg style="left:478.03px;top:116.99px" width="8.74" height="7.22" viewBox="0 0 18 15"><path d="M1.500 8l5 5.500L17 2" fill="none" stroke="#0f7a0f" stroke-width="3.400" stroke-linejoin="miter"/><path d="M1.500 8l5 5.500L17 2" fill="none" stroke="#2cb82c" stroke-width="2"/></svg>
<div style="left:492px;top:114.6px;width:1.2px;height:11.5px;border-left:0.6px solid #c8c4b2;border-right:0.6px solid #f8f7f0"></div>
<div style="left:539.4px;top:114.6px;width:1.2px;height:11.5px;border-left:0.6px solid #c8c4b2;border-right:0.6px solid #f8f7f0"></div>
<div style="left:596.2px;top:114.6px;width:1.2px;height:11.5px;border-left:0.6px solid #c8c4b2;border-right:0.6px solid #f8f7f0"></div>
<svg style="left:499.64px;top:117px" width="7.92" height="7.2" viewBox="0 0 18 16"><path d="M5.500 7.500C9 2.500 15.500 4.500 15.500 9.500c0 3.500-3 5.500-7 5" fill="none" stroke="#a8a898" stroke-width="3.400"/><path d="M0.500 1.500l1.200 10 9-4z" fill="#a8a898"/></svg>
<svg style="left:513.4px;top:116.6px" width="8.2" height="8.2" viewBox="0 0 16 16"><rect x="1" y="1" width="8" height="10" fill="#c8c4b4" stroke="#a09c8c" stroke-width="1"/><rect x="6" y="5" width="8.500" height="10" fill="#b8b4a4" stroke="#a09c8c" stroke-width="1"/></svg>
<svg style="left:526.6px;top:116.4px" width="8.2" height="8.6" viewBox="0 0 16 17"><rect x="1" y="2" width="13" height="14" rx="1" fill="#b4b0a0" stroke="#a09c8c" stroke-width="1"/><rect x="4" y="0.500" width="7" height="3.500" fill="#c8c4b4" stroke="#a09c8c" stroke-width="0.800"/><rect x="6" y="7" width="8.500" height="9" fill="#c4c0b0"/></svg>
<svg style="left:544.6px;top:117.18px" width="7.6" height="6.84" viewBox="0 0 16 14"><g transform="rotate(180 8 7)"><path d="M1 4.800h7.500V1L15.200 7L8.500 13V9.200H1z" fill="#1a5ae0" stroke="#0a2a90" stroke-width="0.900"/></g></svg>
<svg style="left:557.4px;top:117.18px" width="7.6" height="6.84" viewBox="0 0 16 14"><g transform="rotate(0 8 7)"><path d="M1 4.800h7.500V1L15.200 7L8.500 13V9.200H1z" fill="#1a5ae0" stroke="#0a2a90" stroke-width="0.900"/></g></svg>
<svg style="left:570.8px;top:117.18px" width="7.6" height="6.84" viewBox="0 0 16 14"><g transform="rotate(-90 8 7)"><path d="M1 4.800h7.500V1L15.200 7L8.500 13V9.200H1z" fill="#1a5ae0" stroke="#0a2a90" stroke-width="0.900"/></g></svg>
<svg style="left:584.2px;top:117.18px" width="7.6" height="6.84" viewBox="0 0 16 14"><g transform="rotate(90 8 7)"><path d="M1 4.800h7.500V1L15.200 7L8.500 13V9.200H1z" fill="#1a5ae0" stroke="#0a2a90" stroke-width="0.900"/></g></svg>
<svg style="left:601.2px;top:116.8px" width="7.8" height="7.4" viewBox="0 0 16 15"><rect x="0.600" y="0.600" width="14.800" height="13.800" fill="#fff" stroke="#2848b8" stroke-width="1.200"/><path d="M4.300 1v13M8 1v13M11.700 1v13M1 4v0h14M1 7.500h14M1 11h14" stroke="#2848b8" stroke-width="1.200"/></svg>
<div style="left:472.5px;top:128.6px;width:32.9px;height:177.4px;background:#ece9d8"></div>
<div style="left:505.4px;top:129.8px;width:232.8px;height:176px;background:#aca899;border:0.6px solid #8e8c7c"></div>
<div style="left:738.2px;top:128.6px;width:41.8px;height:177.4px;background:#ece9d8"></div>
<svg style="left:505.3px;top:130.1px" width="37.4" height="37.4" viewBox="0 0 65 65"><rect width="65" height="65" fill="#0840a8"/><defs><linearGradient id="pw" x1="0" y1="0" x2="0" y2="1"><stop offset="0" stop-color="#f8dc98"/><stop offset="0.45" stop-color="#e0a444"/><stop offset="1" stop-color="#a06418"/></linearGradient><linearGradient id="pf" x1="0" y1="0" x2="1" y2="0"><stop offset="0" stop-color="#a86c1c"/><stop offset="0.35" stop-color="#f8d890"/><stop offset="0.65" stop-color="#e0a040"/><stop offset="1" stop-color="#a0641a"/></linearGradient></defs><path d="M4 27c0-4 6-6.500 14-6.500h29c8 0 14 2.500 14 6.500s-5 6-12 6H16c-7 0-12-2-12-6z" fill="url(#pw)" stroke="#6a4010" stroke-width="0.700"/><path d="M18.700 20c0-3.500 6.300-3.500 6.300 0l-1 33c0 1.600-4.300 1.600-4.300 0z" fill="url(#pf)" stroke="#6a4010" stroke-width="0.600"/><path d="M40 20c0-3.500 6.300-3.500 6.300 0l-1 33c0 1.600-4.300 1.600-4.300 0z" fill="url(#pf)" stroke="#6a4010" stroke-width="0.600"/><path d="M28.500 18c0-6 7.300-6 7.300 0v17c0 5-7.300 5-7.300 0z" fill="url(#pf)" stroke="#6a4010" stroke-width="0.600"/><rect x="30.200" y="20.200" width="4" height="7.300" rx="1.800" fill="#d8f6fc" stroke="#4a98a8" stroke-width="0.700"/><rect x="14.600" y="46.400" width="35.100" height="6.300" rx="3.100" fill="url(#pw)" stroke="#6a4010" stroke-width="0.700"/><circle cx="12.600" cy="26.500" r="2" fill="#e8eefc"/><circle cx="12.600" cy="26.500" r="1.100" fill="#2848b8"/><circle cx="52" cy="26.500" r="2" fill="#e8eefc"/><circle cx="52" cy="26.500" r="1.100" fill="#2848b8"/><rect x="20.600" y="29.600" width="2.600" height="3.600" fill="#3a3a40"/><rect x="41.900" y="29.600" width="2.600" height="3.600" fill="#3a3a40"/><path d="M16.800 17.300h10M38.200 17.300h10" stroke="#f0f0f0" stroke-width="0.900"/><circle cx="22.600" cy="17.200" r="1.300" fill="#e03020"/><circle cx="43.900" cy="17.200" r="1.300" fill="#e03020"/></svg>
<div class="tb" style="left:474.5px;top:134px;width:12.5px;height:12.9px;"></div>
<svg style="left:476.2px;top:135.6px" width="8.64" height="8.64" viewBox="0 0 19 19"><path d="M2 17.500L9 10" stroke="#c89828" stroke-width="3.200" stroke-linecap="round"/><circle cx="12" cy="7" r="5.400" fill="#d8ecff" stroke="#5a88c8" stroke-width="1.600"/></svg>
<div class="t b" style="left:481.800px;top:134.200px;font-size:5px;color:#1848c8">+</div>
<div class="tb" style="left:474.5px;top:150.2px;width:12.5px;height:12.5px;"></div>
<div class="tb" style="left:488.2px;top:150.2px;width:12.5px;height:12.5px;"></div>
<div class="tb" style="left:474.5px;top:171.2px;width:12.5px;height:12.5px;"></div>
<div class="tb" style="left:488.2px;top:171.2px;width:12.5px;height:12.5px;"></div>
<div class="tb" style="left:474.5px;top:186.5px;width:12.5px;height:12.5px;"></div>
<div class="tb" style="left:488.2px;top:186.5px;width:12.5px;height:12.5px;"></div>
<div class="tb" style="left:474.5px;top:203.2px;width:12.5px;height:12.5px;"></div>
<div class="tb" style="left:488.2px;top:203.2px;width:12.5px;height:12.5px;"></div>
<div class="tb" style="left:474.5px;top:219.4px;width:12.5px;height:12.5px;"></div>
<div class="tb" style="left:488.2px;top:219.4px;width:12.5px;height:12.5px;"></div>
<div class="tb" style="left:474.5px;top:235.4px;width:12.5px;height:12px;"></div>
<div style="left:476.2px;top:152.2px;width:9.2px;height:8.6px;background:#2a68e0;border:0.6px solid #103a90"></div>
<div style="left:479.6px;top:153.4px;width:5.8px;height:6.2px;background:#ff7a7a"></div>
<svg style="left:477.4px;top:154.6px" width="5.6" height="3.8" viewBox="0 0 11 8"><path d="M0 4l5-4v2.500h6v3h-6V8z" fill="#e01818"/></svg>
<div style="left:490.6px;top:152.8px;width:7.8px;height:7.4px;border:0.8px dashed #222"></div>
<svg style="left:476.4px;top:173px" width="8.8" height="8.8" viewBox="0 0 18 18"><path d="M3 15l1.500-5L13 1.500l3.500 3.500L8 13.500z" fill="#e02828" stroke="#333" stroke-width="0.900"/><path d="M3 15l1.500-5 3.500 3.500z" fill="#f0d8a0" stroke="#333" stroke-width="0.700"/></svg>
<svg style="left:490px;top:173px" width="9" height="9" viewBox="0 0 18 18"><path d="M4 16l3-8 4-4 3 3-4 4z" fill="#4a5a8a" stroke="#223" stroke-width="0.900"/><path d="M11 4l4-3" stroke="#223" stroke-width="1.600"/><path d="M3 6l2 1M2 9l2 0M5 3l1 2M9 14l2 1M12 11l2 1" stroke="#3858c8" stroke-width="1"/></svg>
<svg style="left:476.4px;top:188.4px" width="8.8" height="8.8" viewBox="0 0 18 18"><path d="M3 16l1-4 7-7 3 3-7 7z" fill="#3a62c8" stroke="#223" stroke-width="0.900"/><path d="M10 4l3-3 4 4-3 3z" fill="#222"/></svg>
<svg style="left:489.8px;top:188.6px" width="9.4" height="8.6" viewBox="0 0 19 17"><path d="M2 11l8-9 7 5-8 9z" fill="#d88848" stroke="#5a3010" stroke-width="0.900"/><path d="M2 11l3-3.400 7 5-3 3.400z" fill="#f4f0e8" stroke="#5a3010" stroke-width="0.700"/><path d="M3 13c-2 1-1 3 1 2.500" fill="none" stroke="#2848c8" stroke-width="1.200"/></svg>
<svg style="left:476.6px;top:205px" width="8.4" height="8.8" viewBox="0 0 17 18"><path d="M1.500 1.500L15.500 16.500" stroke="#1838a8" stroke-width="1.800"/></svg>
<div style="left:490.6px;top:205.8px;width:8px;height:7.4px;background:#3a74e4;border:0.5px solid #2a58b8"></div>
<div style="left:477px;top:222px;width:7.8px;height:7.6px;background:#3a74e4;border-radius:50%"></div>
<div style="left:490.6px;top:222.2px;width:8px;height:7.2px;background:#3a74e4;border-radius:2.400px"></div>
<div class="t b" style="left:476.200px;top:236.800px;font-size:8px;color:#e01818;font-family:'Liberation Serif',serif;letter-spacing:-0.5px">T<span style="font-size:6.400px;color:#1838c8">T</span></div>
<div style="left:474.5px;top:252.8px;width:26.5px;height:50.4px;border:0.6px solid #d0ccbc;border-radius:1px"></div>
<div style="left:476.4px;top:256px;width:23px;height:7.6px;border:0.6px solid #9a9a90;border-radius:1.400px;background:#f4f3ec"></div>
<div style="left:480.5px;top:259.55px;width:16px;height:0.5px;background:#555"></div>
<div style="left:480.5px;top:268.3px;width:16px;height:0.8px;background:#111"></div>
<div style="left:480.5px;top:277.05px;width:16px;height:1.1px;background:#111"></div>
<div style="left:480.5px;top:286px;width:16px;height:1.6px;background:#111"></div>
<div style="left:480.5px;top:294.7px;width:16px;height:2.2px;background:#111"></div>
<div class="t" style="left:741.4px;top:134.9px;width:16.6px;text-align:center;">left</div>
<div class="t" style="left:760.4px;top:134.9px;width:17px;text-align:center;">right</div>
<div style="left:741px;top:143.2px;width:17px;height:16px;background:#000;border:0.6px solid #444"></div>
<div style="left:761.4px;top:143.2px;width:17px;height:16px;background:#fff;border:0.6px solid #7a7a70;box-shadow:inset -0.6px -0.6px 0 #bbb"></div>
<div style="left:741px;top:166px;width:37.4px;height:9.6px;background:#0840a8;border:0.6px solid #6a7a98"></div>
<svg style="left:742px;top:180.2px" width="35" height="52" viewBox="0 0 35 52"><rect x="-0.500" y="-0.500" width="36" height="52" fill="#888"/><rect x="0.00" y="0.00" width="5.88" height="5.71" fill="rgb(255, 0, 0)"/><rect x="5.83" y="0.00" width="5.88" height="5.71" fill="rgb(255, 255, 0)"/><rect x="11.67" y="0.00" width="5.88" height="5.71" fill="rgb(0, 255, 0)"/><rect x="17.50" y="0.00" width="5.88" height="5.71" fill="rgb(0, 255, 255)"/><rect x="23.33" y="0.00" width="5.88" height="5.71" fill="rgb(0, 0, 255)"/><rect x="29.17" y="0.00" width="5.88" height="5.71" fill="rgb(255, 0, 255)"/><rect x="0.00" y="5.66" width="5.88" height="5.71" fill="rgb(64, 0, 0)"/><rect x="5.83" y="5.66" width="5.88" height="5.71" fill="rgb(64, 64, 0)"/><rect x="11.67" y="5.66" width="5.88" height="5.71" fill="rgb(0, 64, 0)"/><rect x="17.50" y="5.66" width="5.88" height="5.71" fill="rgb(0, 64, 64)"/><rect x="23.33" y="5.66" width="5.88" height="5.71" fill="rgb(0, 0, 64)"/><rect x="29.17" y="5.66" width="5.88" height="5.71" fill="rgb(64, 0, 64)"/><rect x="0.00" y="11.32" width="5.88" height="5.71" fill="rgb(128, 0, 0)"/><rect x="5.83" y="11.32" width="5.88" height="5.71" fill="rgb(128, 128, 0)"/><rect x="11.67" y="11.32" width="5.88" height="5.71" fill="rgb(0, 128, 0)"/><rect x="17.50" y="11.32" width="5.88" height="5.71" fill="rgb(0, 128, 128)"/><rect x="23.33" y="11.32" width="5.88" height="5.71" fill="rgb(0, 0, 128)"/><rect x="29.17" y="11.32" width="5.88" height="5.71" fill="rgb(128, 0, 128)"/><rect x="0.00" y="16.98" width="5.88" height="5.71" fill="rgb(191, 0, 0)"/><rect x="5.83" y="16.98" width="5.88" height="5.71" fill="rgb(191, 191, 0)"/><rect x="11.67" y="16.98" width="5.88" height="5.71" fill="rgb(0, 191, 0)"/><rect x="17.50" y="16.98" width="5.88" height="5.71" fill="rgb(0, 191, 191)"/><rect x="23.33" y="16.98" width="5.88" height="5.71" fill="rgb(0, 0, 191)"/><rect x="29.17" y="16.98" width="5.88" height="5.71" fill="rgb(191, 0, 191)"/><rect x="0.00" y="22.64" width="5.88" height="5.71" fill="rgb(255, 76, 76)"/><rect x="5.83" y="22.64" width="5.88" height="5.71" fill="rgb(255, 255, 76)"/><rect x="11.67" y="22.64" width="5.88" height="5.71" fill="rgb(76, 255, 76)"/><rect x="17.50" y="22.64" width="5.88" height="5.71" fill="rgb(76, 255, 255)"/><rect x="23.33" y="22.64" width="5.88" height="5.71" fill="rgb(76, 76, 255)"/><rect x="29.17" y="22.64" width="5.88" height="5.71" fill="rgb(255, 76, 255)"/><rect x="0.00" y="28.30" width="5.88" height="5.71" fill="rgb(255, 140, 140)"/><rect x="5.83" y="28.30" width="5.88" height="5.71" fill="rgb(255, 255, 140)"/><rect x="11.67" y="28.30" width="5.88" height="5.71" fill="rgb(140, 255, 140)"/><rect x="17.50" y="28.30" width="5.88" height="5.71" fill="rgb(140, 255, 255)"/><rect x="23.33" y="28.30" width="5.88" height="5.71" fill="rgb(140, 140, 255)"/><rect x="29.17" y="28.30" width="5.88" height="5.71" fill="rgb(255, 140, 255)"/><rect x="0.00" y="33.96" width="5.88" height="5.71" fill="rgb(255, 204, 204)"/><rect x="5.83" y="33.96" width="5.88" height="5.71" fill="rgb(255, 255, 204)"/><rect x="11.67" y="33.96" width="5.88" height="5.71" fill="rgb(204, 255, 204)"/><rect x="17.50" y="33.96" width="5.88" height="5.71" fill="rgb(204, 255, 255)"/><rect x="23.33" y="33.96" width="5.88" height="5.71" fill="rgb(204, 204, 255)"/><rect x="29.17" y="33.96" width="5.88" height="5.71" fill="rgb(255, 204, 255)"/><rect x="0.00" y="40.22" width="5.88" height="5.66" fill="rgb(0,0,0)"/><rect x="5.83" y="40.22" width="5.88" height="5.66" fill="rgb(40,40,40)"/><rect x="11.67" y="40.22" width="5.88" height="5.66" fill="rgb(80,80,80)"/><rect x="17.50" y="40.22" width="5.88" height="5.66" fill="rgb(120,120,120)"/><rect x="23.33" y="40.22" width="5.88" height="5.66" fill="rgb(180,180,180)"/><rect x="29.17" y="40.22" width="5.88" height="5.66" fill="rgb(255,255,255)"/><defs><linearGradient id="gw" x1="0" x2="1"><stop offset="0" stop-color="#000"/><stop offset="1" stop-color="#fff"/></linearGradient></defs><rect x="0" y="45.88" width="35" height="5.06" fill="url(#gw)"/></svg>
<div style="left:741.4px;top:234.6px;width:36.2px;height:53px;background:linear-gradient(90deg,#000 0%,rgba(0,0,0,0) 50%,rgba(255,255,255,0) 50%,#fff 100%),linear-gradient(180deg,#f00 0%,#ff0 17%,#0f0 33%,#0ff 50%,#00f 67%,#f0f 83%,#f00 100%);border:0.6px solid #8a8878"></div>
<div style="left:473px;top:306px;width:307px;height:11px;background:#ece9d8;border-top:0.6px solid #b4b0a0"></div>
<div style="left:516px;top:307px;width:0.6px;height:10px;background:#c4c0b0"></div>
<div class="t" style="left:519px;top:309.5px;font-size:6.2px;">Paint using the mouse button. Hold &lt;Ctrl&gt; to pick a color.</div>
<svg style="left:773.6px;top:310.8px" width="6" height="6" viewBox="0 0 12 12"><path d="M11 1L1 11M11 5L5 11M11 9L9 11" stroke="#a8a494" stroke-width="1.400"/></svg>
<div style="left:98px;top:332.6px;width:349.5px;height:200.4px;background:#ece9d8"></div>
<svg style="left:0;top:0" width="800" height="547" viewBox="0 0 800 547"><path d="M97 534V321.6A4.2 4.2 0 0 1 101.2 317.4H444.3A4.2 4.2 0 0 1 448.5 321.6V534zM99.2 333.6H446.3V531.8H99.2z" fill="#6f7ed9" fill-rule="evenodd"/><path d="M97.8 333.6V321.6A3.4 3.4 0 0 1 101.2 317.8H444.3A3.4 3.4 0 0 1 447.7 321.6V333.6z" fill="url(#tgi)"/></svg>
<div class="tt" style="left:111.3px;top:321.8px;font-size:7.5px;color:rgba(255,255,255,0.9);">Object Properties</div>
<div style="left:433.9px;top:320.5px;width:11.3px;height:11.4px;background:linear-gradient(135deg,#c8788c,#b45c74 50%,#a85068);border:0.7px solid rgba(255,255,255,0.72);border-radius:1.6px"></div>
<svg style="left:436.5px;top:323.15px" width="6.1" height="6.1" viewBox="0 0 10 10"><path d="M0.5 0.5L9.5 9.5M9.5 0.5L0.5 9.5" stroke="#fff" stroke-width="2" stroke-linecap="square"/></svg>
<div style="left:420.7px;top:320.5px;width:11.3px;height:11.4px;background:linear-gradient(135deg,#6a88ea,#4060d4 50%,#3a56cc);border:0.7px solid rgba(255,255,255,0.72);border-radius:1.6px"></div>
<div style="left:422.96px;top:323.01px;width:6.78px;height:6.38px;border:0.5px solid #fff;border-top-width:1.2px"></div>
<div style="left:407.5px;top:320.5px;width:11.3px;height:11.4px;background:linear-gradient(135deg,#6a88ea,#4060d4 50%,#3a56cc);border:0.7px solid rgba(255,255,255,0.72);border-radius:1.6px"></div>
<div style="left:409.99px;top:327.57px;width:4.07px;height:2.05px;background:#fff"></div>
<div style="left:101.6px;top:322.2px;width:6.1px;height:8px;background:linear-gradient(135deg,#fff,#dce8fc);border:0.5px solid #c8d4f0"></div>
<svg style="left:102.1px;top:323.7px" width="5" height="5" viewBox="0 0 20 20"><defs><radialGradient id="bg1" cx="0.38" cy="0.3" r="0.75"><stop offset="0" stop-color="#7aa0ff"/><stop offset="0.4" stop-color="#1030e8"/><stop offset="1" stop-color="#000878"/></radialGradient></defs><circle cx="10" cy="10" r="9.600" fill="url(#bg1)"/></svg>
<div class="t" style="left:104px;top:341px;"><u>N</u>ame:</div>
<div class="fld" style="left:126px;top:339.2px;width:64.8px;height:10.8px;"></div>
<div class="t" style="left:129px;top:341.2px;">obj_myplane</div>
<div class="gb" style="left:103.5px;top:356.6px;width:87.3px;height:35px;"></div>
<div style="left:108.5px;top:352.6px;width:15.9px;height:8px;background:#ece9d8"></div>
<div class="t" style="left:110px;top:353.2px;color:#0046d5">Sprite</div>
<svg style="left:107.1px;top:363.7px" width="9" height="7" viewBox="0 0 18 14"><rect x="0.500" y="3.500" width="17" height="2.600" rx="1.200" fill="#c88a38"/><rect x="5" y="1" width="2.200" height="10" fill="#b87828"/><rect x="10.800" y="1" width="2.200" height="10" fill="#b87828"/><rect x="3.500" y="10.500" width="11" height="2" fill="#c88a38"/></svg>
<div class="fldd" style="left:122px;top:362px;width:50.2px;height:11.2px;"></div>
<div class="t" style="left:124.2px;top:364.2px;">spr_myplane</div>
<svg style="left:176.6px;top:363.8px" width="8" height="8" viewBox="0 0 16 16"><rect x="0.600" y="0.600" width="12" height="11" fill="#dfe8fa" stroke="#5a80c0" stroke-width="1"/><rect x="0.600" y="0.600" width="12" height="3" fill="#3a68c8"/><path d="M3 7h7M3 9.500h7" stroke="#6a88c0" stroke-width="1"/><path d="M9 10l6 5" stroke="#4a70b8" stroke-width="1.800"/></svg>
<div class="btn" style="left:122.5px;top:378.7px;width:26.5px;height:8.1px;"></div>
<div class="t" style="left:122.5px;top:379.45px;width:26.5px;text-align:center;">N<u>e</u>w</div>
<div class="btn" style="left:159.6px;top:378.7px;width:26.2px;height:8.1px;"></div>
<div class="t" style="left:159.6px;top:379.45px;width:26.2px;text-align:center;">E<u>d</u>it</div>
<div class="cb" style="left:102.7px;top:399.1px;width:7.8px;height:7.8px;"></div>
<svg style="left:104.3px;top:400.4px" width="5" height="5.2" viewBox="0 0 9 9"><path d="M1 4l2.500 3L8 1.500" fill="none" stroke="#21a121" stroke-width="1.900"/></svg>
<div class="t" style="left:112.9px;top:399.8px;"><u>V</u>isible</div>
<div class="cb" style="left:148.9px;top:399.1px;width:7.8px;height:7.8px;"></div>
<div class="t" style="left:159.1px;top:399.8px;"><u>S</u>olid</div>
<div class="t" style="left:104px;top:414.4px;"><u>D</u>epth:</div>
<div class="fld" style="left:126px;top:412.2px;width:64.8px;height:11px;"></div>
<div class="t" style="left:129px;top:414.4px;">-100</div>
<div class="cb" style="left:125.7px;top:426.9px;width:7.8px;height:7.8px;"></div>
<div class="t" style="left:135.9px;top:427.6px;">P<u>e</u>rsistent</div>
<div class="t" style="left:104px;top:441.6px;"><u>P</u>arent:</div>
<div class="fldd" style="left:126px;top:440px;width:51px;height:10.8px;"></div>
<div class="t" style="left:128.6px;top:442px;">&lt;no parent&gt;</div>
<svg style="left:180.4px;top:441.6px" width="8" height="8" viewBox="0 0 16 16"><rect x="0.600" y="0.600" width="12" height="11" fill="#dfe8fa" stroke="#5a80c0" stroke-width="1"/><rect x="0.600" y="0.600" width="12" height="3" fill="#3a68c8"/><path d="M3 7h7M3 9.500h7" stroke="#6a88c0" stroke-width="1"/><path d="M9 10l6 5" stroke="#4a70b8" stroke-width="1.800"/></svg>
<div class="t" style="left:104px;top:455.6px;"><u>M</u>ask:</div>
<div class="fldd" style="left:126px;top:453.8px;width:51px;height:10.8px;"></div>
<div class="t" style="left:128.4px;top:455.8px;font-size:5.9px;">&lt;same as sprite&gt;</div>
<svg style="left:180.4px;top:455.4px" width="8" height="8" viewBox="0 0 16 16"><rect x="0.600" y="0.600" width="12" height="11" fill="#dfe8fa" stroke="#5a80c0" stroke-width="1"/><rect x="0.600" y="0.600" width="12" height="3" fill="#3a68c8"/><path d="M3 7h7M3 9.500h7" stroke="#6a88c0" stroke-width="1"/><path d="M9 10l6 5" stroke="#4a70b8" stroke-width="1.800"/></svg>
<div class="btn" style="left:108.5px;top:472.4px;width:77.3px;height:12.8px;border-color:#3c5a96;box-shadow:inset 0 0 0 0.8px #bcd0f6"></div>
<div class="t" style="left:108.5px;top:475.5px;width:77.3px;text-align:center;"></div>
<svg style="left:119px;top:475.4px" width="6.8" height="6.8" viewBox="0 0 20 20"><defs><radialGradient id="ig" cx="0.4" cy="0.3" r="0.8"><stop offset="0" stop-color="#9ac0ff"/><stop offset="0.5" stop-color="#2a60e0"/><stop offset="1" stop-color="#10308a"/></radialGradient></defs><circle cx="10" cy="10" r="9.4" fill="url(#ig)" stroke="#c8d4ee" stroke-width="1"/><rect x="8.600" y="8.400" width="3" height="7" fill="#fff"/><circle cx="10" cy="5.400" r="1.700" fill="#fff"/></svg>
<div class="t" style="left:129.6px;top:475.5px;">Show <u>I</u>nformation</div>
<div class="btn" style="left:127px;top:500px;width:41.8px;height:12.4px;border-color:#3c5a96;box-shadow:inset 0 0 0 0.8px #bcd0f6"></div>
<div class="t" style="left:127px;top:502.9px;width:41.8px;text-align:center;"></div>
<svg style="left:138.01px;top:503.24px" width="7.18" height="5.93" viewBox="0 0 18 15"><path d="M1.500 8l5 5.500L17 2" fill="none" stroke="#0f7a0f" stroke-width="3.400" stroke-linejoin="miter"/><path d="M1.500 8l5 5.500L17 2" fill="none" stroke="#2cb82c" stroke-width="2"/></svg>
<div class="t" style="left:149px;top:502.9px;"><u>O</u>K</div>
<div style="left:194.6px;top:334px;width:1.4px;height:197.8px;border-left:1px solid #fbfaf4;border-right:1px solid #d8d4c4"></div>
<div class="t" style="left:200.4px;top:339.6px;">Events:</div>
<div class="fld" style="left:200.4px;top:348px;width:69.2px;height:143.6px;"></div>
<svg style="left:202.8px;top:349.8px" width="6" height="9.2" viewBox="0 0 12 18"><circle cx="6" cy="6" r="5.400" fill="#ffe030" stroke="#c8a000" stroke-width="0.800"/><circle cx="4.600" cy="4.600" r="1.800" fill="#fffbe0"/><rect x="3.800" y="11" width="4.400" height="5" fill="#9a9a9a" stroke="#555" stroke-width="0.700"/></svg>
<div class="t" style="left:213px;top:351.2px;font-size:6.35px;">Create</div>
<svg style="left:202px;top:361.5px" width="8.6" height="8.6" viewBox="0 0 18 18"><circle cx="9" cy="9" r="8" fill="#eef4ff" stroke="#5a78b8" stroke-width="1.600"/><path d="M9 4v5l-3.500 2.500" fill="none" stroke="#2848a8" stroke-width="1.400"/></svg>
<div class="t" style="left:213px;top:362.7px;font-size:6.35px;">Alarm 0</div>
<svg style="left:201.6px;top:373.4px" width="9.4" height="8" viewBox="0 0 19 16"><path d="M1 10l6-3 11 3-2 5-10 0z" fill="#b8c8ec" stroke="#5a70b0" stroke-width="0.900"/><path d="M5 8l1-6 4 0 1 6z" fill="#90a8e0" stroke="#5a70b0" stroke-width="0.900"/></svg>
<div class="t" style="left:213px;top:374.2px;font-size:6.35px;">&lt;Space&gt;</div>
<div style="left:201px;top:383.3px;width:68px;height:11.4px;background:#316ac5"></div>
<svg style="left:201.6px;top:384.9px" width="9.4" height="8" viewBox="0 0 19 16"><path d="M1 10l6-3 11 3-2 5-10 0z" fill="#b8c8ec" stroke="#5a70b0" stroke-width="0.900"/><path d="M5 8l1-6 4 0 1 6z" fill="#90a8e0" stroke="#5a70b0" stroke-width="0.900"/></svg>
<div class="t" style="left:213px;top:385.7px;font-size:6.35px;color:#fff">&lt;Left&gt;</div>
<svg style="left:201.6px;top:396.4px" width="9.4" height="8" viewBox="0 0 19 16"><path d="M1 10l6-3 11 3-2 5-10 0z" fill="#b8c8ec" stroke="#5a70b0" stroke-width="0.900"/><path d="M5 8l1-6 4 0 1 6z" fill="#90a8e0" stroke="#5a70b0" stroke-width="0.900"/></svg>
<div class="t" style="left:213px;top:397.2px;font-size:6.35px;">&lt;Up&gt;</div>
<svg style="left:201.6px;top:407.9px" width="9.4" height="8" viewBox="0 0 19 16"><path d="M1 10l6-3 11 3-2 5-10 0z" fill="#b8c8ec" stroke="#5a70b0" stroke-width="0.900"/><path d="M5 8l1-6 4 0 1 6z" fill="#90a8e0" stroke="#5a70b0" stroke-width="0.900"/></svg>
<div class="t" style="left:213px;top:408.7px;font-size:6.35px;">&lt;Right&gt;</div>
<svg style="left:201.6px;top:419.4px" width="9.4" height="8" viewBox="0 0 19 16"><path d="M1 10l6-3 11 3-2 5-10 0z" fill="#b8c8ec" stroke="#5a70b0" stroke-width="0.900"/><path d="M5 8l1-6 4 0 1 6z" fill="#90a8e0" stroke="#5a70b0" stroke-width="0.900"/></svg>
<div class="t" style="left:213px;top:420.2px;font-size:6.35px;">&lt;Down&gt;</div>
<div class="btn" style="left:200.4px;top:496.5px;width:69px;height:12.7px;"></div>
<div class="t" style="left:200.4px;top:499.55px;width:69px;text-align:center;">Add Event</div>
<div class="btn" style="left:200.4px;top:513.4px;width:31.8px;height:12.6px;"></div>
<div class="t" style="left:200.4px;top:516.4px;width:31.8px;text-align:center;">Delete</div>
<div class="btn" style="left:236.8px;top:513.4px;width:32.6px;height:12.6px;"></div>
<div class="t" style="left:236.8px;top:516.4px;width:32.6px;text-align:center;">Change</div>
<div class="t" style="left:272.7px;top:339.6px;">Actions:</div>
<div class="fld" style="left:272.7px;top:348px;width:102.1px;height:178px;"></div>
<svg style="left:274.6px;top:349px" width="14.2" height="14.2" viewBox="0 0 26 26"><path d="M8 1h10l7 7v10l-7 7H8l-7-7V8z" fill="#b8bce8" stroke="#303890" stroke-width="1.400"/><text x="13" y="16.600" font-size="9.400" font-weight="bold" fill="#10209a" text-anchor="middle" font-family="Liberation Sans">VAR</text></svg>
<div class="t" style="left:291.2px;top:353px;font-size:6.2px;">If x is larger than 40</div>
<div class="ab" style="left:274.8px;top:364.4px;width:14px;height:14.4px;"></div>
<svg style="left:276px;top:365.8px" width="11.6" height="11.6" viewBox="0 0 20 20"><path d="M4 15V9c0-6 10-6 10-1" fill="none" stroke="#e02020" stroke-width="2.600"/><path d="M10.500 6.500l7 1.500-4 5z" fill="#e02020"/><path d="M2 16l2 2M4 16l-2 2M15 16l2 2M17 16l-2 2" stroke="#2848c8" stroke-width="1"/></svg>
<div class="t" style="left:291.2px;top:368px;font-size:6.2px;">Jump to a given position</div>
<div style="left:377.6px;top:334px;width:68.2px;height:197.8px;background:#ece9d8"></div>
<div style="left:434.6px;top:336px;width:0.5px;height:195.8px;background:#a0a49c"></div>
<div style="left:434px;top:336.4px;width:12px;height:22.6px;background:#f6f5ee;border:0.5px solid #a0a49c;border-left:none;border-radius:0 2px 2px 0"></div>
<div class="t" style="left:424.6px;top:343.7px;width:30px;text-align:center;transform:rotate(90deg);color:#222">move</div>
<div style="left:435px;top:360px;width:9.6px;height:21px;background:linear-gradient(90deg,#f8f8f4,#eeede4 70%,#e2e0d4);border:0.5px solid #a0a49c;border-left:none;border-radius:0 2px 2px 0"></div>
<div class="t" style="left:424.6px;top:366.5px;width:30px;text-align:center;transform:rotate(90deg);color:#222">main1</div>
<div style="left:435px;top:382.4px;width:9.6px;height:23px;background:linear-gradient(90deg,#f8f8f4,#eeede4 70%,#e2e0d4);border:0.5px solid #a0a49c;border-left:none;border-radius:0 2px 2px 0"></div>
<div class="t" style="left:424.6px;top:389.9px;width:30px;text-align:center;transform:rotate(90deg);color:#222">main2</div>
<div style="left:435px;top:406.8px;width:9.6px;height:24.6px;background:linear-gradient(90deg,#f8f8f4,#eeede4 70%,#e2e0d4);border:0.5px solid #a0a49c;border-left:none;border-radius:0 2px 2px 0"></div>
<div class="t" style="left:424.6px;top:415.1px;width:30px;text-align:center;transform:rotate(90deg);color:#222">control</div>
<div style="left:435px;top:432.8px;width:9.6px;height:22.6px;background:linear-gradient(90deg,#f8f8f4,#eeede4 70%,#e2e0d4);border:0.5px solid #a0a49c;border-left:none;border-radius:0 2px 2px 0"></div>
<div class="t" style="left:424.6px;top:440.1px;width:30px;text-align:center;transform:rotate(90deg);color:#222">score</div>
<div style="left:435px;top:456.8px;width:9.6px;height:22.8px;background:linear-gradient(90deg,#f8f8f4,#eeede4 70%,#e2e0d4);border:0.5px solid #a0a49c;border-left:none;border-radius:0 2px 2px 0"></div>
<div class="t" style="left:424.6px;top:464.2px;width:30px;text-align:center;transform:rotate(90deg);color:#222">extra</div>
<div style="left:435px;top:481px;width:9.6px;height:23.5px;background:linear-gradient(90deg,#f8f8f4,#eeede4 70%,#e2e0d4);border:0.5px solid #a0a49c;border-left:none;border-radius:0 2px 2px 0"></div>
<div class="t" style="left:424.6px;top:488.75px;width:30px;text-align:center;transform:rotate(90deg);color:#222">draw</div>
<div style="left:380.4px;top:339.2px;width:51.6px;height:0.6px;background:#d0ccbc"></div>
<div style="left:382.8px;top:335.2px;width:16.5px;height:8px;background:#ece9d8"></div>
<div class="t" style="left:384.4px;top:336px;">Move</div>
<div style="left:380.4px;top:402.4px;width:51.6px;height:0.6px;background:#d0ccbc"></div>
<div style="left:382.8px;top:398.4px;width:15.5px;height:8px;background:#ece9d8"></div>
<div class="t" style="left:384.4px;top:399.2px;">Jump</div>
<div style="left:380.4px;top:466.4px;width:51.6px;height:0.6px;background:#d0ccbc"></div>
<div style="left:382.8px;top:462.4px;width:16.5px;height:8px;background:#ece9d8"></div>
<div class="t" style="left:384.4px;top:463.2px;">Paths</div>
<div style="left:380.4px;top:509.8px;width:51.6px;height:0.6px;background:#d0ccbc"></div>
<div style="left:382.8px;top:505.8px;width:16.5px;height:8px;background:#ece9d8"></div>
<div class="t" style="left:384.4px;top:506.6px;">Steps</div>
<div class="ab" style="left:380.4px;top:344.4px;width:13.6px;height:13.8px;"></div>
<svg style="left:381.7px;top:345.8px" width="11" height="11" viewBox="0 0 20 20"><path d="M10 1v18M1 10h18M3.600 3.600l12.800 12.800M16.400 3.600L3.600 16.400" stroke="#e02020" stroke-width="1.800"/><path d="M10 1l-2 3h4zM10 19l-2-3h4zM1 10l3-2v4zM19 10l-3-2v4z" fill="#e02020"/></svg>
<div class="ab" style="left:398.6px;top:344.4px;width:13.6px;height:13.8px;"></div>
<svg style="left:399.9px;top:345.8px" width="11" height="11" viewBox="0 0 20 20"><path d="M10 1v18M1 10h18M3.600 3.600l12.800 12.800M16.400 3.600L3.600 16.400" stroke="#1848c8" stroke-width="1.800"/><path d="M10 1l-2 3h4zM10 19l-2-3h4zM1 10l3-2v4zM19 10l-3-2v4z" fill="#1848c8"/></svg>
<div class="ab" style="left:416.8px;top:344.4px;width:13.6px;height:13.8px;"></div>
<svg style="left:418.1px;top:345.8px" width="11" height="11" viewBox="0 0 20 20"><path d="M3 17L14 6" stroke="#e02020" stroke-width="2.400"/><path d="M9 4.500l8-1.500-1.500 8z" fill="#e02020"/><circle cx="17" cy="3" r="1.500" fill="#1848c8"/></svg>
<div class="ab" style="left:380.4px;top:362.8px;width:13.6px;height:13.8px;"></div>
<svg style="left:381.7px;top:364.2px" width="11" height="11" viewBox="0 0 20 20"><path d="M2 8h8V4l8 6-8 6v-4H2z" fill="#e02020"/><path d="M4 5v10" stroke="#e02020" stroke-width="1.400"/></svg>
<div class="ab" style="left:398.6px;top:362.8px;width:13.6px;height:13.8px;"></div>
<svg style="left:399.9px;top:364.2px" width="11" height="11" viewBox="0 0 20 20"><path d="M8 2h4v8h4l-6 8-6-8h4z" fill="#e02020"/><path d="M5 4h10" stroke="#e02020" stroke-width="1.400"/></svg>
<div class="ab" style="left:416.8px;top:362.8px;width:13.6px;height:13.8px;"></div>
<svg style="left:418.1px;top:364.2px" width="11" height="11" viewBox="0 0 20 20"><path d="M8 2h4v8h4l-6 8-6-8h4z" fill="#1848c8"/><path d="M5 3h10M5 6h10" stroke="#1848c8" stroke-width="1.200"/></svg>
<div class="ab" style="left:380.4px;top:381.2px;width:13.6px;height:13.8px;"></div>
<svg style="left:381.7px;top:382.6px" width="11" height="11" viewBox="0 0 20 20"><path d="M17 4H6v0M17 4v10H8" fill="none" stroke="#e02020" stroke-width="2.600"/><path d="M9 9.500v9L2 14z" fill="#e02020"/></svg>
<div class="ab" style="left:398.6px;top:381.2px;width:13.6px;height:13.8px;"></div>
<svg style="left:399.9px;top:382.6px" width="11" height="11" viewBox="0 0 20 20"><path d="M15 18V7c0-5-8-5-8 0v5" fill="none" stroke="#e02020" stroke-width="2.600"/><path d="M2.500 11h9L7 18z" fill="#e02020"/></svg>
<div class="ab" style="left:416.8px;top:381.2px;width:13.6px;height:13.8px;"></div>
<svg style="left:418.1px;top:382.6px" width="11" height="11" viewBox="0 0 20 20"><path d="M1 8h5V5l4 5-4 5v-3H1zM19 8h-5V5l-4 5 4 5v-3h5z" fill="#e02020"/></svg>
<div class="ab" style="left:380.4px;top:407.4px;width:13.6px;height:13.8px;"></div>
<svg style="left:381.7px;top:408.8px" width="11" height="11" viewBox="0 0 20 20"><path d="M4 15V9c0-6 10-6 10-1" fill="none" stroke="#e02020" stroke-width="2.600"/><path d="M10.500 6.500l7 1.500-4 5z" fill="#e02020"/><path d="M2 16l2 2M4 16l-2 2" stroke="#2848c8" stroke-width="1"/><path d="M15 16l2 2M17 16l-2 2" stroke="#2848c8" stroke-width="1"/></svg>
<div class="ab" style="left:398.6px;top:407.4px;width:13.6px;height:13.8px;"></div>
<svg style="left:399.9px;top:408.8px" width="11" height="11" viewBox="0 0 20 20"><path d="M4 15V9c0-6 10-6 10-1" fill="none" stroke="#e02020" stroke-width="2.600"/><path d="M10.500 6.500l7 1.500-4 5z" fill="#e02020"/><path d="M2 16l2 2M4 16l-2 2" stroke="#2848c8" stroke-width="1"/><circle cx="16" cy="17" r="1.800" fill="#e8c020"/></svg>
<div class="ab" style="left:416.8px;top:407.4px;width:13.6px;height:13.8px;"></div>
<svg style="left:418.1px;top:408.8px" width="11" height="11" viewBox="0 0 20 20"><path d="M4 15V9c0-6 10-6 10-1" fill="none" stroke="#e02020" stroke-width="2.600"/><path d="M10.500 6.500l7 1.500-4 5z" fill="#e02020"/><path d="M2 16l2 2M4 16l-2 2" stroke="#2848c8" stroke-width="1"/><text x="16" y="19" font-size="7" font-weight="bold" fill="#2848c8" text-anchor="middle" font-family="Liberation Sans">?</text></svg>
<div class="ab" style="left:380.4px;top:425.6px;width:13.6px;height:13.8px;"></div>
<svg style="left:381.7px;top:427px" width="11" height="11" viewBox="0 0 20 20"><path d="M7 2v16M13 2v16M2 7h16M2 13h16" stroke="#1848c8" stroke-width="1.700" fill="none"/></svg>
<div class="ab" style="left:398.6px;top:425.6px;width:13.6px;height:13.8px;"></div>
<svg style="left:399.9px;top:427px" width="11" height="11" viewBox="0 0 20 20"><path d="M10 2v6M10 8l-6 6M10 8l6 6M4 5c4-3 8-3 12 0" fill="none" stroke="#e03030" stroke-width="2"/><path d="M2 14l4 2-1-4zM18 14l-4 2 1-4z" fill="#e03030"/></svg>
<div class="ab" style="left:380.4px;top:443.8px;width:13.6px;height:13.8px;"></div>
<svg style="left:381.7px;top:445.2px" width="11" height="11" viewBox="0 0 20 20"><path d="M10 2v8" stroke="#e02020" stroke-width="2.600"/><path d="M5 8h10l-5 6z" fill="#e02020"/><rect x="2" y="15" width="16" height="3" fill="#1848c8"/></svg>
<div class="ab" style="left:398.6px;top:443.8px;width:13.6px;height:13.8px;"></div>
<svg style="left:399.9px;top:445.2px" width="11" height="11" viewBox="0 0 20 20"><rect x="4" y="2" width="3" height="16" fill="#1848c8"/><path d="M16 3l-8 7 8 7" fill="none" stroke="#e02020" stroke-width="2.600"/></svg>
<div class="ab" style="left:380.4px;top:470.8px;width:13.6px;height:13.8px;"></div>
<svg style="left:381.7px;top:472.2px" width="11" height="11" viewBox="0 0 20 20"><path d="M4 2v10c0 5 7 5 7 1 0-3 3-4 5-7" fill="none" stroke="#1848c8" stroke-width="2.200"/><path d="M12 2.500h5.500V8" fill="none" stroke="#1848c8" stroke-width="2"/></svg>
<div class="ab" style="left:398.6px;top:470.8px;width:13.6px;height:13.8px;"></div>
<svg style="left:399.9px;top:472.2px" width="11" height="11" viewBox="0 0 20 20"><path d="M4 2v10c0 5 7 5 7 1 0-3 3-4 5-7" fill="none" stroke="#1848c8" stroke-width="2.200"/><path d="M12 2.500h5.500V8" fill="none" stroke="#1848c8" stroke-width="2"/><path d="M3 4l14 13M17 4L3 17" stroke="#e02020" stroke-width="1.800"/></svg>
<div class="ab" style="left:380.4px;top:489px;width:13.6px;height:13.8px;"></div>
<svg style="left:381.7px;top:490.4px" width="11" height="11" viewBox="0 0 20 20"><path d="M4 2v10c0 5 7 5 7 1 0-3 3-4 5-7" fill="none" stroke="#1848c8" stroke-width="2.200"/><path d="M12 2.500h5.500V8" fill="none" stroke="#1848c8" stroke-width="2"/><path d="M19 14h-6M15 11l-3 3 3 3" fill="none" stroke="#e02020" stroke-width="1.800"/></svg>
<div class="ab" style="left:398.6px;top:489px;width:13.6px;height:13.8px;"></div>
<svg style="left:399.9px;top:490.4px" width="11" height="11" viewBox="0 0 20 20"><path d="M4 2v10c0 5 7 5 7 1 0-3 3-4 5-7" fill="none" stroke="#1848c8" stroke-width="2.200"/><path d="M12 2.500h5.500V8" fill="none" stroke="#1848c8" stroke-width="2"/><path d="M8 14h8M14 10l4 4-4 4" fill="none" stroke="#e02020" stroke-width="2"/></svg>
<div class="ab" style="left:380.4px;top:515.4px;width:13.6px;height:13.8px;"></div>
<svg style="left:381.7px;top:516.8px" width="11" height="11" viewBox="0 0 20 20"><path d="M3 17L15 5" stroke="#e02020" stroke-width="2" stroke-dasharray="2.500 1.500"/><circle cx="16" cy="4" r="2" fill="#1848c8"/></svg>
<div class="ab" style="left:398.6px;top:515.4px;width:13.6px;height:13.8px;"></div>
<svg style="left:399.9px;top:516.8px" width="11" height="11" viewBox="0 0 20 20"><path d="M3 6h12M3 10h12M3 14h12" stroke="#e02020" stroke-width="1.600" stroke-dasharray="2.500 1.500"/><circle cx="16" cy="4" r="2" fill="#1848c8"/></svg>
<div style="left:476px;top:359.3px;width:290.6px;height:148.3px;background:#ece9d8"></div>
<svg style="left:0;top:0" width="800" height="547" viewBox="0 0 800 547"><path d="M475 508.6V348.2A4.2 4.2 0 0 1 479.2 344H763.4A4.2 4.2 0 0 1 767.6 348.2V508.6zM477.2 360.3H765.4V506.4H477.2z" fill="#6f7ed9" fill-rule="evenodd"/><path d="M475.8 360.3V348.2A3.4 3.4 0 0 1 479.2 344.4H763.4A3.4 3.4 0 0 1 766.8 348.2V360.3z" fill="url(#tgi)"/></svg>
<div class="tt" style="left:489px;top:349.45px;font-size:7.5px;color:rgba(255,255,255,0.9);">Sprite Properties</div>
<div style="left:753px;top:347.1px;width:11.3px;height:11.4px;background:linear-gradient(135deg,#c8788c,#b45c74 50%,#a85068);border:0.7px solid rgba(255,255,255,0.72);border-radius:1.6px"></div>
<svg style="left:755.6px;top:349.75px" width="6.1" height="6.1" viewBox="0 0 10 10"><path d="M0.5 0.5L9.5 9.5M9.5 0.5L0.5 9.5" stroke="#fff" stroke-width="2" stroke-linecap="square"/></svg>
<div style="left:739.8px;top:347.1px;width:11.3px;height:11.4px;background:linear-gradient(135deg,#6a88ea,#4060d4 50%,#3a56cc);border:0.7px solid rgba(255,255,255,0.72);border-radius:1.6px"></div>
<div style="left:742.06px;top:349.61px;width:6.78px;height:6.38px;border:0.5px solid #fff;border-top-width:1.2px"></div>
<div style="left:726.6px;top:347.1px;width:11.3px;height:11.4px;background:linear-gradient(135deg,#6a88ea,#4060d4 50%,#3a56cc);border:0.7px solid rgba(255,255,255,0.72);border-radius:1.6px"></div>
<div style="left:729.09px;top:354.17px;width:4.07px;height:2.05px;background:#fff"></div>
<svg style="left:478.8px;top:348.2px" width="7" height="8" viewBox="0 0 14 16"><rect x="0.500" y="0.500" width="13" height="15" fill="#fff" stroke="#c8d0f0" stroke-width="1"/><path d="M7.500 8L12 5.500A5 5 0 1 0 12 10.500z" fill="#e81010"/></svg>
<div class="t" style="left:481.7px;top:367.2px;"><u>N</u>ame:</div>
<div class="fld" style="left:503.8px;top:365.4px;width:56px;height:11.4px;"></div>
<div class="t" style="left:506.4px;top:367.6px;">spr_myplane</div>
<div class="btn" style="left:491.4px;top:384.4px;width:68.2px;height:12.8px;border-color:#3c5a96;box-shadow:inset 0 0 0 0.8px #bcd0f6"></div>
<div class="t" style="left:491.4px;top:387.5px;width:68.2px;text-align:center;"></div>
<svg style="left:504px;top:386.6px" width="9.4" height="8.4" viewBox="0 0 19 17"><path d="M1 4h6l1.500 2h8.500v10h-16z" fill="#f0c83c" stroke="#a87c10" stroke-width="1"/><path d="M1 16l3-7h14.500l-3 7z" fill="#fbe487" stroke="#a87c10" stroke-width="1"/><path d="M10 3.500c2-3 5-3 7-1l1-1.200v4h-4l1.200-1.200c-1.400-1.200-3-1-4 .2z" fill="#28a028"/></svg>
<div class="t" style="left:516.2px;top:387.5px;"><u>L</u>oad Sprite</div>
<div class="t" style="left:490.7px;top:402.8px;">Width: 65</div>
<div class="t" style="left:527.6px;top:402.8px;">Height: 65</div>
<div class="t" style="left:490.7px;top:411.6px;">Number of subimages: 3</div>
<div class="t" style="left:490.7px;top:425.8px;">Show:</div>
<div class="fldd" style="left:532px;top:425.6px;width:13.2px;height:9.8px;"></div>
<div class="t" style="left:538.4px;top:427.2px;font-size:6.4px;">0</div>
<div class="btn" style="left:546.5px;top:425.6px;width:13.1px;height:9.8px;border-color:#3c5a96;box-shadow:inset 0 0 0 0.8px #bcd0f6"></div>
<div class="t" style="left:546.5px;top:427.2px;width:13.1px;text-align:center;"></div>
<svg style="left:549.6px;top:427.44px" width="6.8" height="6.12" viewBox="0 0 16 14"><g transform="rotate(0 8 7)"><path d="M1 4.800h7.500V1L15.200 7L8.500 13V9.200H1z" fill="#1a5ae0" stroke="#0a2a90" stroke-width="0.900"/></g></svg>
<div class="btn" style="left:491.4px;top:443.6px;width:68.2px;height:13px;border-color:#3c5a96;box-shadow:inset 0 0 0 0.8px #bcd0f6"></div>
<div class="t" style="left:491.4px;top:446.8px;width:68.2px;text-align:center;"></div>
<svg style="left:506.2px;top:446px" width="8.6" height="7.6" viewBox="0 0 17 15"><ellipse cx="8.500" cy="7.500" rx="8" ry="7" fill="#f4ecd8" stroke="#8a7a58" stroke-width="0.800"/><circle cx="5" cy="5" r="1.700" fill="#e02020"/><circle cx="9.500" cy="3.800" r="1.700" fill="#20a020"/><circle cx="13" cy="6.500" r="1.700" fill="#2040e0"/><circle cx="5" cy="10" r="1.700" fill="#e0c020"/></svg>
<div class="t" style="left:517.4px;top:446.8px;"><u>E</u>dit Sprite</div>
<div class="cb" style="left:480.9px;top:462.7px;width:7.8px;height:7.8px;"></div>
<svg style="left:482.5px;top:464px" width="5" height="5.2" viewBox="0 0 9 9"><path d="M1 4l2.500 3L8 1.500" fill="none" stroke="#21a121" stroke-width="1.900"/></svg>
<div class="t" style="left:491.1px;top:463.4px;">T<u>r</u>ansparent</div>
<div class="btn" style="left:505px;top:489.8px;width:45px;height:12.6px;border-color:#3c5a96;box-shadow:inset 0 0 0 0.8px #bcd0f6"></div>
<div class="t" style="left:505px;top:492.8px;width:45px;text-align:center;"></div>
<svg style="left:516.01px;top:493.04px" width="7.18" height="5.93" viewBox="0 0 18 15"><path d="M1.500 8l5 5.500L17 2" fill="none" stroke="#0f7a0f" stroke-width="3.400" stroke-linejoin="miter"/><path d="M1.500 8l5 5.500L17 2" fill="none" stroke="#2cb82c" stroke-width="2"/></svg>
<div class="t" style="left:527.8px;top:492.8px;"><u>O</u>K</div>
<div style="left:573px;top:361.5px;width:0.6px;height:144.1px;background:#c8c4b4"></div>
<div class="cb" style="left:576.8px;top:366.5px;width:7.8px;height:7.8px;"></div>
<svg style="left:578.4px;top:367.8px" width="5" height="5.2" viewBox="0 0 9 9"><path d="M1 4l2.500 3L8 1.500" fill="none" stroke="#21a121" stroke-width="1.900"/></svg>
<div class="t" style="left:587px;top:367.2px;">Precise collision checking</div>
<div class="cb" style="left:576.8px;top:380.1px;width:7.8px;height:7.8px;"></div>
<div class="t" style="left:587px;top:380.8px;">Smooth edges</div>
<div class="cb" style="left:576.8px;top:394px;width:7.8px;height:7.8px;"></div>
<svg style="left:578.4px;top:395.3px" width="5" height="5.2" viewBox="0 0 9 9"><path d="M1 4l2.500 3L8 1.500" fill="none" stroke="#21a121" stroke-width="1.900"/></svg>
<div class="t" style="left:587px;top:394.7px;">Preload texture</div>
<div class="gb" style="left:577px;top:407.5px;width:87.6px;height:35.7px;"></div>
<div style="left:582.4px;top:403.5px;width:18.2px;height:8px;background:#ece9d8"></div>
<div class="t" style="left:584px;top:405.2px;color:#0046d5">Origin</div>
<div class="t" style="left:588.8px;top:416px;"><u>X</u></div>
<div class="fld" style="left:596.2px;top:413.8px;width:18.2px;height:10.8px;"></div>
<div class="t" style="left:599px;top:416px;font-size:6.4px;">32</div>
<div class="t" style="left:629.8px;top:416px;"><u>Y</u></div>
<div class="fld" style="left:637.3px;top:413.8px;width:18.4px;height:10.8px;"></div>
<div class="t" style="left:639.4px;top:416px;font-size:6.4px;">32</div>
<div class="btn" style="left:601.3px;top:429.5px;width:35.7px;height:9.1px;"></div>
<div class="t" style="left:601.3px;top:430.75px;width:35.7px;text-align:center;"><u>C</u>enter</div>
<div class="gb" style="left:577px;top:449.3px;width:87.6px;height:52.9px;"></div>
<div style="left:582.4px;top:445.3px;width:36.4px;height:8px;background:#ece9d8"></div>
<div class="t" style="left:584px;top:446.6px;color:#0046d5">Bounding Box</div>
<div class="rb" style="left:582.3px;top:455.3px;width:7.4px;height:7.4px;"></div>
<div style="left:584.6px;top:457.6px;width:2.8px;height:2.8px;background:#21a121;border-radius:50%"></div>
<div class="t" style="left:591.6px;top:455.8px;">Automatic</div>
<div class="rb" style="left:623.5px;top:455.3px;width:7.4px;height:7.4px;"></div>
<div class="t" style="left:632.8px;top:455.8px;">Full image</div>
<div class="rb" style="left:582.3px;top:464.3px;width:7.4px;height:7.4px;"></div>
<div class="t" style="left:591.6px;top:464.8px;">Manual</div>
<div class="t" style="left:584.9px;top:475.8px;"><u>L</u>eft</div>
<div class="fld" style="left:596.2px;top:473px;width:18.2px;height:11.4px;border-color:#b4c2d4"></div>
<div class="t" style="left:599px;top:475.8px;font-size:6.4px;color:#aca899">3</div>
<div class="t" style="left:626.5px;top:475.8px;"><u>R</u>ight</div>
<div class="fld" style="left:641.6px;top:473px;width:18.8px;height:11.4px;border-color:#b4c2d4"></div>
<div class="t" style="left:644px;top:475.8px;font-size:6.4px;color:#aca899">61</div>
<div class="t" style="left:584.9px;top:489.1px;"><u>T</u>op</div>
<div class="fld" style="left:596.2px;top:486.6px;width:18.2px;height:11.4px;border-color:#b4c2d4"></div>
<div class="t" style="left:599px;top:489.1px;font-size:6.4px;color:#aca899">13</div>
<div class="t" style="left:622.2px;top:489.1px;"><u>B</u>ottom</div>
<div class="fld" style="left:641.6px;top:486.6px;width:18.8px;height:11.4px;border-color:#b4c2d4"></div>
<div class="t" style="left:644px;top:489.1px;font-size:6.4px;color:#aca899">55</div>
<div style="left:669.3px;top:361.2px;width:1.2px;height:145.2px;background:#fff;border-left:0.5px solid #b8b4a4"></div>
<svg style="left:670.6px;top:361.4px" width="37.2" height="37.2" viewBox="0 0 65 65"><rect width="65" height="65" fill="#0840a8"/><defs><linearGradient id="pw" x1="0" y1="0" x2="0" y2="1"><stop offset="0" stop-color="#f8dc98"/><stop offset="0.45" stop-color="#e0a444"/><stop offset="1" stop-color="#a06418"/></linearGradient><linearGradient id="pf" x1="0" y1="0" x2="1" y2="0"><stop offset="0" stop-color="#a86c1c"/><stop offset="0.35" stop-color="#f8d890"/><stop offset="0.65" stop-color="#e0a040"/><stop offset="1" stop-color="#a0641a"/></linearGradient></defs><path d="M4 27c0-4 6-6.500 14-6.500h29c8 0 14 2.500 14 6.500s-5 6-12 6H16c-7 0-12-2-12-6z" fill="url(#pw)" stroke="#6a4010" stroke-width="0.700"/><path d="M18.700 20c0-3.500 6.300-3.500 6.300 0l-1 33c0 1.600-4.300 1.600-4.300 0z" fill="url(#pf)" stroke="#6a4010" stroke-width="0.600"/><path d="M40 20c0-3.500 6.300-3.500 6.300 0l-1 33c0 1.600-4.300 1.600-4.300 0z" fill="url(#pf)" stroke="#6a4010" stroke-width="0.600"/><path d="M28.500 18c0-6 7.300-6 7.300 0v17c0 5-7.300 5-7.300 0z" fill="url(#pf)" stroke="#6a4010" stroke-width="0.600"/><rect x="30.200" y="20.200" width="4" height="7.300" rx="1.800" fill="#d8f6fc" stroke="#4a98a8" stroke-width="0.700"/><rect x="14.600" y="46.400" width="35.100" height="6.300" rx="3.100" fill="url(#pw)" stroke="#6a4010" stroke-width="0.700"/><circle cx="12.600" cy="26.500" r="2" fill="#e8eefc"/><circle cx="12.600" cy="26.500" r="1.100" fill="#2848b8"/><circle cx="52" cy="26.500" r="2" fill="#e8eefc"/><circle cx="52" cy="26.500" r="1.100" fill="#2848b8"/><rect x="20.600" y="29.600" width="2.600" height="3.600" fill="#3a3a40"/><rect x="41.900" y="29.600" width="2.600" height="3.600" fill="#3a3a40"/><path d="M16.800 17.300h10M38.200 17.300h10" stroke="#f0f0f0" stroke-width="0.900"/><circle cx="22.600" cy="17.200" r="1.300" fill="#e03020"/><circle cx="43.900" cy="17.200" r="1.300" fill="#e03020"/></svg>
<svg style="left:670.6px;top:361.4px" width="37.2" height="37.2" viewBox="0 0 37.200 37.200"><path d="M18.800 0v37.200M0 19.100h37.200" stroke="#9a8c78" stroke-width="1"/><rect x="1.700" y="7.900" width="33.300" height="23.700" fill="none" stroke="#9a8c78" stroke-width="0.900"/></svg>
</div></body></html>
